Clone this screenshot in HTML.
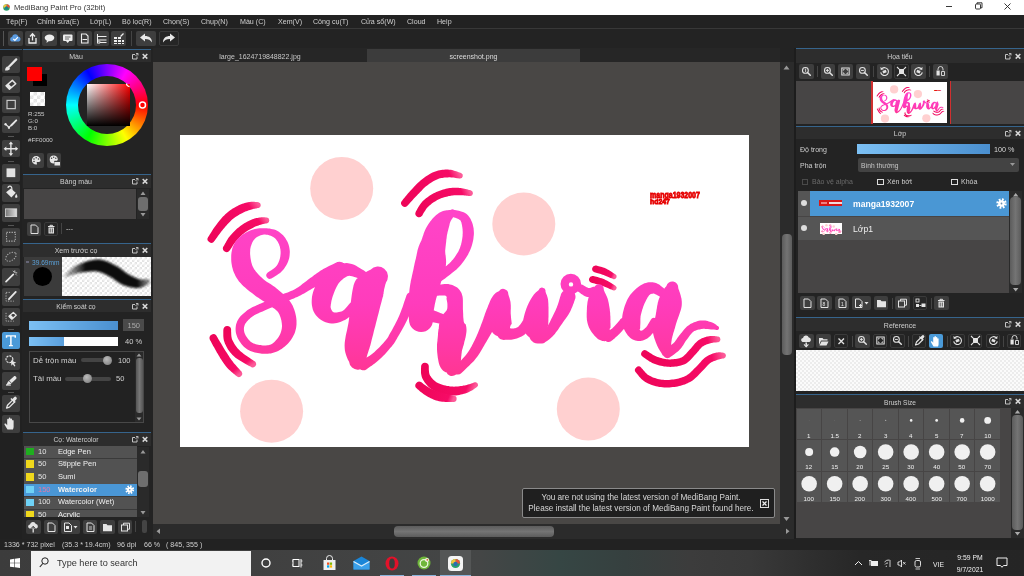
<!DOCTYPE html>
<html><head><meta charset="utf-8"><style>
*{margin:0;padding:0;box-sizing:border-box}
html,body{width:1024px;height:576px;overflow:hidden;background:#232323;font-family:"Liberation Sans",sans-serif;}
.a{position:absolute}
.b{position:absolute;background:#3e3e3e;border-radius:2px}
.h{position:absolute;background:#2d2d2d;border-top:1px solid #36648c}
.t{position:absolute;white-space:nowrap;color:#d0d0d0;font-size:7.5px;line-height:10px;will-change:transform}
.c{text-align:center}
.chk{background-color:#fff;background-image:linear-gradient(45deg,#e4e4e4 25%,transparent 25%,transparent 75%,#e4e4e4 75%),linear-gradient(45deg,#e4e4e4 25%,transparent 25%,transparent 75%,#e4e4e4 75%);background-size:5px 5px;background-position:0 0,2.5px 2.5px}
svg{position:absolute;overflow:visible}
</style></head><body>
<div class="a" style="left:0px;top:0px;width:1024px;height:15px;background:#fff;"></div>
<svg style="left:3px;top:3.5px" width="7" height="7" viewBox="0 0 9 9"><circle cx="4.5" cy="4.5" r="4.2" fill="#2aa36b"/><path d="M4.5 .3a4.2 4.2 0 0 1 4.2 4.2h-4.2z" fill="#e8553c"/><path d="M.3 4.5a4.2 4.2 0 0 1 4.2-4.2v4.2z" fill="#f2c63c"/><circle cx="4.5" cy="5" r="2" fill="#1d7f8f"/></svg>
<div class="t" style="left:14px;top:2.5px;font-size:7.6px;color:#333;">MediBang Paint Pro (32bit)</div>
<svg style="left:945px;top:2px" width="70" height="9" viewBox="0 0 70 9"><path d="M1 4.5h6" stroke="#222" stroke-width="0.9"/><rect x="30.5" y="2" width="5" height="5" fill="none" stroke="#222" stroke-width="0.9" rx="1"/><path d="M32 2v-1.2h5v5h-1.5" fill="none" stroke="#222" stroke-width="0.9"/><path d="M59.5 1.5l6 6M65.5 1.5l-6 6" stroke="#222" stroke-width="0.9"/></svg>
<div class="a" style="left:0px;top:15px;width:1024px;height:13px;background:#222;"></div>
<div class="t" style="left:6px;top:17px;font-size:7.1px;color:#d0d0d0;">Tệp(F)</div>
<div class="t" style="left:36.5px;top:17px;font-size:7.1px;color:#d0d0d0;">Chỉnh sửa(E)</div>
<div class="t" style="left:89.5px;top:17px;font-size:7.1px;color:#d0d0d0;">Lớp(L)</div>
<div class="t" style="left:121.5px;top:17px;font-size:7.1px;color:#d0d0d0;">Bộ lọc(R)</div>
<div class="t" style="left:162.5px;top:17px;font-size:7.1px;color:#d0d0d0;">Chọn(S)</div>
<div class="t" style="left:200.5px;top:17px;font-size:7.1px;color:#d0d0d0;">Chụp(N)</div>
<div class="t" style="left:240px;top:17px;font-size:7.1px;color:#d0d0d0;">Màu (C)</div>
<div class="t" style="left:277.5px;top:17px;font-size:7.1px;color:#d0d0d0;">Xem(V)</div>
<div class="t" style="left:313px;top:17px;font-size:7.1px;color:#d0d0d0;">Công cụ(T)</div>
<div class="t" style="left:361px;top:17px;font-size:7.1px;color:#d0d0d0;">Cửa sổ(W)</div>
<div class="t" style="left:406.5px;top:17px;font-size:7.1px;color:#d0d0d0;">Cloud</div>
<div class="t" style="left:437px;top:17px;font-size:7.1px;color:#d0d0d0;">Help</div>
<div class="a" style="left:0px;top:28px;width:1024px;height:20px;background:#232323;border-top:1px solid #383838"></div>
<div class="a" style="left:3px;top:31px;width:1px;height:15px;background:#555;"></div>
<div class="b" style="left:8px;top:31px;width:15px;height:15px;background:#3e3e3e;"></div>
<div class="b" style="left:25px;top:31px;width:15px;height:15px;background:#3e3e3e;"></div>
<div class="b" style="left:42px;top:31px;width:15px;height:15px;background:#3e3e3e;"></div>
<div class="b" style="left:59.5px;top:31px;width:15px;height:15px;background:#3e3e3e;"></div>
<div class="b" style="left:77px;top:31px;width:15px;height:15px;background:#3e3e3e;"></div>
<div class="b" style="left:94px;top:31px;width:15px;height:15px;background:#3e3e3e;"></div>
<div class="b" style="left:111px;top:31px;width:15px;height:15px;background:#3e3e3e;"></div>
<div class="a" style="left:131px;top:31px;width:1px;height:15px;background:#444;"></div>
<div class="b" style="left:136px;top:31px;width:19.5px;height:15px;background:#3e3e3e;"></div>
<div class="b" style="left:159px;top:31px;width:19.5px;height:15px;background:#262626;border:1px solid #3a3a3a"></div>
<svg style="left:139px;top:33px" width="14" height="11" viewBox="0 0 14 11"><path d="M1 4.5l5-4v2.5c4 0 7 2 7 6.5c-1.5-2.5-3.5-3.5-7-3.5v2.5z" fill="#e8e8e8"/></svg>
<svg style="left:162px;top:33px" width="14" height="11" viewBox="0 0 14 11"><path d="M13 4.5l-5-4v2.5c-4 0-7 2-7 6.5c1.5-2.5 3.5-3.5 7-3.5v2.5z" fill="#e8e8e8"/></svg>
<svg style="left:8px;top:31px" width="15" height="15" viewBox="0 0 15 15"><path d="M3.5 10.5a2.3 2.3 0 0 1 .6-4.4a3.2 3.2 0 0 1 6.2-.6a2.6 2.6 0 0 1 .6 5z" fill="#5b9be0"/><path d="M5.3 7.8l1.6 1.6l3-3.2" stroke="#fff" stroke-width="1.2" fill="none"/></svg>
<svg style="left:25px;top:31px" width="15" height="15" viewBox="0 0 15 15"><path d="M4 7v5h7v-5" fill="none" stroke="#eee" stroke-width="1.3"/><path d="M7.5 9.5v-6M5 5.5l2.5-2.7l2.5 2.7" fill="none" stroke="#eee" stroke-width="1.3"/></svg>
<svg style="left:42px;top:31px" width="15" height="15" viewBox="0 0 15 15"><ellipse cx="7.5" cy="6.8" rx="4.8" ry="3.4" fill="#eee"/><path d="M5 9l-.5 3l3-2.4z" fill="#eee"/></svg>
<svg style="left:59.5px;top:31px" width="15" height="15" viewBox="0 0 15 15"><rect x="3" y="3.5" width="9.5" height="6.5" rx="1" fill="#eee"/><path d="M6 10l1.7 2l1.7-2z" fill="#eee"/><path d="M5 6h5.5M5 8h4" stroke="#444" stroke-width="0.8"/></svg>
<svg style="left:77px;top:31px" width="15" height="15" viewBox="0 0 15 15"><path d="M4.5 3h4.5l2 2v7h-6.5z" fill="none" stroke="#eee" stroke-width="1.1"/><path d="M5.5 8.5h4.5" stroke="#eee" stroke-width="1"/></svg>
<svg style="left:94px;top:31px" width="15" height="15" viewBox="0 0 15 15"><path d="M3.5 3v9.5M3.5 5.5h9M3.5 9h9M5.5 11.5h7" stroke="#eee" stroke-width="1" fill="none"/><circle cx="5" cy="11.2" r="1.2" fill="none" stroke="#eee" stroke-width=".8"/></svg>
<svg style="left:111px;top:31px" width="15" height="15" viewBox="0 0 15 15"><path d="M3 6h3v2h-3zM7 6h3v2h-3zM3 9h3v2h-3zM7 9h3v2h-3zM11 9h2v2h-2zM3 12h3v1h-3zM7 12h3v1h-3zM11 12h2v1h-2z" fill="#eee"/><path d="M9.5 5.5l3-3" stroke="#eee" stroke-width="1.2"/></svg>
<div class="a" style="left:0px;top:48px;width:22px;height:491px;background:#212121;"></div>
<div class="a" style="left:0px;top:49px;width:22px;height:1px;background:#34506a;"></div>
<div class="b" style="left:2.200px;top:55.5px;width:17.800px;height:17.500px;background:#3e3e3e"><svg style="left:0;top:0" width="17.800" height="17.500" viewBox="0 0 18 18"><path d="M14.500 3.500l-7.500 7.500" stroke="#e6e6e6" stroke-width="2.300" stroke-linecap="round"/><path d="M3 15c0-2.300 1-4.200 3-4.200l2 2c0 1.600-2.500 2.400-5 2.200z" fill="#e6e6e6"/></svg></div>
<div class="b" style="left:2.200px;top:75.5px;width:17.800px;height:17.500px;background:#3e3e3e"><svg style="left:0;top:0" width="17.800" height="17.500" viewBox="0 0 18 18"><path d="M4 10l6.500-5.500l3.500 3.500l-6.500 5.500z" fill="none" stroke="#e6e6e6" stroke-width="1.500" stroke-linejoin="round"/><path d="M4 10l2.500-2l3.500 3.500l-2.500 2z" fill="#e6e6e6"/></svg></div>
<div class="b" style="left:2.200px;top:95.5px;width:17.800px;height:17.500px;background:#3e3e3e"><svg style="left:0;top:0" width="17.800" height="17.500" viewBox="0 0 18 18"><rect x="5" y="4.500" width="8.500" height="8.500" fill="none" stroke="#ccc" stroke-width="1.200"/></svg></div>
<div class="b" style="left:2.200px;top:115.5px;width:17.800px;height:17.500px;background:#3e3e3e"><svg style="left:0;top:0" width="17.800" height="17.500" viewBox="0 0 18 18"><path d="M9.500 9.500l5-5" stroke="#e6e6e6" stroke-width="2" stroke-linecap="round"/><path d="M3.500 8.500l3.500 3l2.500-2" fill="none" stroke="#e6e6e6" stroke-width="1.200"/><circle cx="3.500" cy="8.500" r="1.200" fill="#e6e6e6"/><circle cx="7" cy="12" r="1.200" fill="#e6e6e6"/></svg></div>
<div class="b" style="left:2.200px;top:139.5px;width:17.800px;height:17.500px;background:#3e3e3e"><svg style="left:0;top:0" width="17.800" height="17.500" viewBox="0 0 18 18"><path d="M9 3v12M3 9h12" stroke="#e6e6e6" stroke-width="1.400"/><path d="M9 1.500l2.300 2.800h-4.600zM9 16.500l2.300-2.800h-4.600zM1.500 9l2.800-2.300v4.600zM16.500 9l-2.800-2.300v4.600z" fill="#e6e6e6"/></svg></div>
<div class="b" style="left:2.200px;top:164px;width:17.800px;height:17.500px;background:#3e3e3e"><svg style="left:0;top:0" width="17.800" height="17.500" viewBox="0 0 18 18"><rect x="4.500" y="4.500" width="9" height="9" fill="#e2e2e2"/></svg></div>
<div class="b" style="left:2.200px;top:184px;width:17.800px;height:17.500px;background:#3e3e3e"><svg style="left:0;top:0" width="17.800" height="17.500" viewBox="0 0 18 18"><path d="M4 8.500l5-4l5 4.500l-4.500 5z" fill="#e6e6e6"/><path d="M6 4c0-2.500 4-2.500 4 1v2" fill="none" stroke="#e6e6e6" stroke-width="1.200"/><path d="M14.500 10c.8 1.500 1.200 2.300 1.200 3a1.200 1.200 0 0 1-2.400 0c0-.7.400-1.500 1.200-3z" fill="#e6e6e6"/></svg></div>
<div class="b" style="left:2.200px;top:204px;width:17.800px;height:17.500px;background:#3e3e3e"><svg style="left:0;top:0" width="17.800" height="17.500" viewBox="0 0 18 18"><defs><linearGradient id="gg"><stop offset="0" stop-color="#777"/><stop offset="1" stop-color="#ddd"/></linearGradient></defs><rect x="3.500" y="5" width="11.500" height="8" fill="url(#gg)" stroke="#ddd" stroke-width=".8"/></svg></div>
<div class="b" style="left:2.200px;top:228px;width:17.800px;height:17.500px;background:#3e3e3e"><svg style="left:0;top:0" width="17.800" height="17.500" viewBox="0 0 18 18"><rect x="4.500" y="4.500" width="9" height="9" fill="none" stroke="#b0b0b0" stroke-width="1.100" stroke-dasharray="1.300 1.300"/></svg></div>
<div class="b" style="left:2.200px;top:248px;width:17.800px;height:17.500px;background:#3e3e3e"><svg style="left:0;top:0" width="17.800" height="17.500" viewBox="0 0 18 18"><ellipse cx="9" cy="9" rx="6" ry="3.800" transform="rotate(-35 9 9)" fill="none" stroke="#b0b0b0" stroke-width="1.100" stroke-dasharray="1.300 1.300"/></svg></div>
<div class="b" style="left:2.200px;top:268px;width:17.800px;height:17.500px;background:#3e3e3e"><svg style="left:0;top:0" width="17.800" height="17.500" viewBox="0 0 18 18"><path d="M4 14l7.500-7.500" stroke="#e6e6e6" stroke-width="1.800" stroke-linecap="round"/><path d="M13 2.500v2.500M15.500 5h-2M11 3l1 1M15 7.500l-1-1" stroke="#e6e6e6" stroke-width=".9"/></svg></div>
<div class="b" style="left:2.200px;top:288px;width:17.800px;height:17.500px;background:#3e3e3e"><svg style="left:0;top:0" width="17.800" height="17.500" viewBox="0 0 18 18"><path d="M4 5v8.500h8" fill="none" stroke="#b0b0b0" stroke-width="1" stroke-dasharray="1.300 1.300"/><path d="M4 4.500h5" fill="none" stroke="#b0b0b0" stroke-width="1" stroke-dasharray="1.300 1.300"/><path d="M7 11.500l7-7.500" stroke="#e6e6e6" stroke-width="1.900" stroke-linecap="round"/></svg></div>
<div class="b" style="left:2.200px;top:308px;width:17.800px;height:17.500px;background:#3e3e3e"><svg style="left:0;top:0" width="17.800" height="17.500" viewBox="0 0 18 18"><path d="M4 5v8.500h8" fill="none" stroke="#b0b0b0" stroke-width="1" stroke-dasharray="1.300 1.300"/><path d="M7 8.500l4.500-4l3 3l-4.500 4z" fill="none" stroke="#e6e6e6" stroke-width="1.300" stroke-linejoin="round"/><path d="M7 8.500l1.800-1.500l3 3l-1.800 1.500z" fill="#e6e6e6"/></svg></div>
<div class="b" style="left:2.200px;top:331.5px;width:17.800px;height:17.500px;background:#4a9ad8"><svg style="left:0;top:0" width="17.800" height="17.500" viewBox="0 0 18 18"><path d="M4.500 6v-2h9v2M9 4v10M7 14h4" fill="none" stroke="#fff" stroke-width="1.500"/></svg></div>
<div class="b" style="left:2.200px;top:352px;width:17.800px;height:17.500px;background:#3e3e3e"><svg style="left:0;top:0" width="17.800" height="17.500" viewBox="0 0 18 18"><circle cx="7.500" cy="7.500" r="3.500" fill="none" stroke="#e6e6e6" stroke-width="1.200" stroke-dasharray="2.200 1"/><path d="M9 8.500l5.500 2.500l-2.300.8l1.500 2.500l-1.200.7l-1.500-2.500l-1.500 1.700z" fill="#e6e6e6"/></svg></div>
<div class="b" style="left:2.200px;top:372px;width:17.800px;height:17.500px;background:#3e3e3e"><svg style="left:0;top:0" width="17.800" height="17.500" viewBox="0 0 18 18"><path d="M4 13.500l2-3.500l6-5.500c1.500-1 3.500 1 2.500 2.500l-6 5.500z" fill="#e6e6e6"/><path d="M4 13.500h5" stroke="#e6e6e6" stroke-width="1"/><path d="M7 9l2.500 2.500" stroke="#3e3e3e" stroke-width=".8"/></svg></div>
<div class="b" style="left:2.200px;top:394.5px;width:17.800px;height:17.500px;background:#3e3e3e"><svg style="left:0;top:0" width="17.800" height="17.500" viewBox="0 0 18 18"><path d="M4.500 13.500l1-3l5.500-5.500l2 2l-5.500 5.500z" fill="none" stroke="#e6e6e6" stroke-width="1.300" stroke-linejoin="round"/><path d="M10.500 4l1.800-1.800a1.600 1.600 0 0 1 2.300 2.300l-1.800 1.800l1 1l-1 1l-4.300-4.300l1-1z" fill="#e6e6e6"/></svg></div>
<div class="b" style="left:2.200px;top:415px;width:17.800px;height:17.500px;background:#3e3e3e"><svg style="left:0;top:0" width="17.800" height="17.500" viewBox="0 0 18 18"><path d="M5.500 15l-3-5c-.5-1 .6-1.700 1.400-.9l1.300 1.400v-6c0-1 1.600-1 1.600 0v-1.200c0-1 1.700-1 1.700 0v1c0-1 1.700-1 1.700 0v1.500c0-1 1.600-1 1.600 0v6.200c0 1.500-.8 3-.8 3z" fill="#e6e6e6"/></svg></div>
<div class="a" style="left:8px;top:136px;width:6px;height:1px;background:#555;"></div>
<div class="a" style="left:8px;top:160.5px;width:6px;height:1px;background:#555;"></div>
<div class="a" style="left:8px;top:224.5px;width:6px;height:1px;background:#555;"></div>
<div class="a" style="left:8px;top:328.5px;width:6px;height:1px;background:#555;"></div>
<div class="a" style="left:8px;top:392px;width:6px;height:1px;background:#555;"></div>
<div class="a" style="left:23px;top:48px;width:128px;height:491px;background:#232323;"></div>
<div class="h" style="left:23px;top:49px;width:128px;height:13px"></div><div class="t" style="left:23px;top:52px;font-size:7px;color:#cfcfcf;width:106px;text-align:center">Màu</div>
<svg style="left:132px;top:52.5px" width="17" height="7" viewBox="0 0 17 7"><path d="M3 1.500h-2.500v4.500h4.500v-2.500" fill="none" stroke="#c4c4c4" stroke-width="1"/><path d="M3.500 3l2.300-2.300M4 .5h2v2" fill="none" stroke="#c4c4c4" stroke-width=".9"/><path d="M10.700 1l4.600 4.600M15.300 1l-4.600 4.600" stroke="#d8d8d8" stroke-width="1.500"/></svg>
<div class="a" style="left:33px;top:73.5px;width:14px;height:12.5px;background:#000;"></div>
<div class="a" style="left:27px;top:67px;width:14.5px;height:13.5px;background:#fe0000;"></div>
<div class="a chk" style="left:29.5px;top:91.5px;width:15px;height:14px;background-size:7px 7px;background-position:0 0,3.500px 3.500px"></div><div class="t" style="left:27.5px;top:109px;font-size:6.2px;color:#c8c8c8;">R:255</div>
<div class="t" style="left:27.5px;top:116px;font-size:6.2px;color:#c8c8c8;">G:0</div>
<div class="t" style="left:27.5px;top:123px;font-size:6.2px;color:#c8c8c8;">B:0</div>
<div class="t" style="left:27.5px;top:134.6px;font-size:6.2px;color:#c8c8c8;">#FF0000</div>
<div class="a" style="left:65.500px;top:63.500px;width:82px;height:82px;border-radius:50%;background:conic-gradient(from 90deg,#f00,#ff0,#0f0,#0ff,#00f,#f0f,#f00)"></div><div class="a" style="left:77.500px;top:75.500px;width:58px;height:58px;border-radius:50%;background:#232323"></div><div class="a" style="left:86.500px;top:83.500px;width:43px;height:42px;background:linear-gradient(to bottom,rgba(0,0,0,0),#000),linear-gradient(to right,#fff,#f00)"></div><svg style="left:60px;top:60px" width="95" height="95" viewBox="0 0 95 95"><circle cx="82.500" cy="45" r="3" fill="none" stroke="#fff" stroke-width="1.500"/><path d="M66.500 23.500a3 3 0 0 0 3 3" fill="none" stroke="#fff" stroke-width="1.300"/></svg>
<div class="b" style="left:29px;top:153px;width:14.5px;height:14.5px;background:#3e3e3e;"></div>
<div class="b" style="left:46.5px;top:153px;width:14.5px;height:14.5px;background:#3e3e3e;"></div>
<svg style="left:29px;top:153px" width="14.5" height="14.5" viewBox="0 0 14.5 14.5"><path d="M7.200 3a4.300 4.300 0 1 0 0 8.600c1 0 1-.8.600-1.300c-.5-.7 0-1.400.8-1.400h1.300c1 0 1.600-.7 1.600-1.700c0-2.300-2-4.200-4.300-4.200z" fill="#e6e6e6"/><circle cx="5" cy="6" r=".8" fill="#3e3e3e"/><circle cx="7.200" cy="4.800" r=".8" fill="#3e3e3e"/><circle cx="9.500" cy="6" r=".8" fill="#3e3e3e"/><circle cx="5" cy="8.500" r=".8" fill="#3e3e3e"/></svg>
<svg style="left:46.5px;top:153px" width="14.5" height="14.5" viewBox="0 0 14.5 14.5"><path d="M6.700 2.500a4 4 0 1 0 0 8c1 0 1-.8.600-1.300c-.5-.7 0-1.400.8-1.400h1.200c1 0 1.500-.6 1.500-1.500c0-2.100-1.900-3.800-4.100-3.800z" fill="#e6e6e6"/><circle cx="4.600" cy="5.300" r=".7" fill="#3e3e3e"/><circle cx="6.700" cy="4.200" r=".7" fill="#3e3e3e"/><circle cx="8.800" cy="5.300" r=".7" fill="#3e3e3e"/><rect x="7.500" y="9" width="5.500" height="3.500" fill="#e6e6e6"/></svg>
<div class="h" style="left:23px;top:174px;width:128px;height:14px"></div><div class="t" style="left:23px;top:176.7px;font-size:7px;color:#cfcfcf;width:106px;text-align:center">Bảng màu</div>
<svg style="left:132px;top:178px" width="17" height="7" viewBox="0 0 17 7"><path d="M3 1.500h-2.500v4.500h4.500v-2.500" fill="none" stroke="#c4c4c4" stroke-width="1"/><path d="M3.500 3l2.300-2.300M4 .5h2v2" fill="none" stroke="#c4c4c4" stroke-width=".9"/><path d="M10.700 1l4.600 4.600M15.300 1l-4.600 4.600" stroke="#d8d8d8" stroke-width="1.500"/></svg>
<div class="a" style="left:24px;top:189px;width:112px;height:29.5px;background:#474545;"></div>
<div class="a" style="left:137px;top:189px;width:12px;height:29.5px;background:#2a2a2a;"></div>
<div class="a" style="left:137.5px;top:196.5px;width:10.5px;height:14.5px;background:#6e6e6e;border-radius:3px"></div>
<svg style="left:137px;top:189px" width="12" height="30" viewBox="0 0 12 30"><path d="M3.500 6l2.500-3.500l2.500 3.500zM3.500 24l2.500 3.500l2.500-3.500z" fill="#999"/></svg>
<div class="b" style="left:26.5px;top:221.5px;width:14.5px;height:14px;background:#3e3e3e;"></div>
<div class="b" style="left:43.5px;top:221.5px;width:14.5px;height:14px;background:#262626;border:1px solid #3a3a3a"></div>
<svg style="left:26.5px;top:221.5px" width="14.5" height="14" viewBox="0 0 14.5 14"><path d="M4 3h4.500l2.500 2.500v6h-7z" fill="none" stroke="#e0e0e0" stroke-width="1"/></svg>
<svg style="left:43.5px;top:221.5px" width="14.5" height="14" viewBox="0 0 14.5 14"><path d="M4 4.500h6.500M6 4.500v-1.200h2.500v1.200" fill="none" stroke="#e0e0e0" stroke-width="1"/><path d="M4.500 5.500h5.500v6h-5.500z" fill="#e0e0e0"/><path d="M6.200 6.500v4M8.300 6.500v4" stroke="#333" stroke-width=".8"/></svg>
<div class="a" style="left:61px;top:223px;width:1px;height:11px;background:#444;"></div>
<div class="t" style="left:66px;top:224px;font-size:7px;color:#ccc;">---</div>
<div class="h" style="left:23px;top:242.500px;width:128px;height:14px"></div><div class="t" style="left:23px;top:246px;font-size:7px;color:#cfcfcf;width:106px;text-align:center">Xem trước cọ</div>
<svg style="left:132px;top:246.5px" width="17" height="7" viewBox="0 0 17 7"><path d="M3 1.500h-2.500v4.500h4.500v-2.500" fill="none" stroke="#c4c4c4" stroke-width="1"/><path d="M3.500 3l2.300-2.300M4 .5h2v2" fill="none" stroke="#c4c4c4" stroke-width=".9"/><path d="M10.700 1l4.600 4.600M15.300 1l-4.600 4.600" stroke="#d8d8d8" stroke-width="1.500"/></svg>
<div class="a" style="left:24px;top:256.5px;width:37.5px;height:39px;background:#3b3b3b;"></div>
<div class="t" style="left:31.5px;top:258px;font-size:6.6px;color:#5a9fd6;">39.69mm</div>
<div class="a" style="left:25.5px;top:260.5px;width:3px;height:2px;background:#667;"></div>
<div class="a" style="left:32.500px;top:266.500px;width:19px;height:19px;border-radius:50%;background:#000"></div><div class="a chk" style="left:61.500px;top:256.500px;width:89px;height:39px"></div><svg style="left:61.5px;top:256.5px" width="89" height="39" viewBox="0 0 89 39"><defs><filter id="bl" x="-10%" y="-30%" width="120%" height="160%"><feGaussianBlur stdDeviation="1"/></filter><linearGradient id="bg1" x1="0" x2="1"><stop offset="0" stop-color="#111" stop-opacity=".15"/><stop offset=".25" stop-color="#0a0a0a" stop-opacity="1"/><stop offset=".85" stop-color="#0a0a0a" stop-opacity="1"/><stop offset="1" stop-color="#111" stop-opacity=".4"/></linearGradient></defs><path d="M4.3 20.3 L5.1 20.0 L6.2 19.6 L7.4 19.1 L8.7 18.5 L10.2 18.0 L11.7 17.4 L13.2 16.9 L14.8 16.5 L16.3 16.1 L17.8 15.8 L19.4 15.5 L21.2 15.2 L23.1 14.9 L25.0 14.7 L26.9 14.5 L28.8 14.4 L30.6 14.3 L32.3 14.3 L33.8 14.3 L35.1 14.5 L36.3 14.7 L37.4 15.0 L38.6 15.3 L39.7 15.8 L40.9 16.3 L42.2 16.8 L43.5 17.5 L44.8 18.1 L46.3 18.9 L47.6 19.5 L48.7 20.2 L49.8 20.8 L51.0 21.6 L52.2 22.5 L53.4 23.4 L54.7 24.3 L56.1 25.3 L57.6 26.2 L59.2 27.1 L60.8 27.9 L62.4 28.5 L64.0 29.0 L65.5 29.5 L67.1 29.9 L68.6 30.3 L70.2 30.6 L71.7 30.8 L73.2 30.9 L74.7 31.0 L76.2 31.0 L77.7 30.8 L79.2 30.5 L80.6 30.1 L81.9 29.6 L83.0 29.0 L84.0 28.5 L84.9 28.0 L85.6 27.5 L86.2 27.2 L86.6 26.9 A2.5 2.5 0 0 0 85.4 22.1 L85.4 22.1 L84.7 22.1 L83.9 22.2 L83.0 22.3 L82.1 22.4 L81.1 22.5 L80.1 22.5 L79.2 22.5 L78.3 22.4 L77.5 22.2 L76.8 22.0 L76.0 21.7 L75.0 21.4 L74.0 21.0 L72.9 20.5 L71.8 20.0 L70.7 19.5 L69.5 18.9 L68.4 18.3 L67.2 17.7 L66.2 17.1 L65.2 16.5 L64.2 15.9 L63.2 15.1 L62.0 14.3 L60.8 13.3 L59.5 12.3 L58.1 11.3 L56.6 10.3 L55.0 9.3 L53.4 8.5 L51.9 7.7 L50.5 7.0 L49.1 6.2 L47.5 5.5 L45.8 4.7 L44.0 4.0 L42.1 3.4 L40.2 3.0 L38.0 2.6 L35.9 2.5 L33.6 2.6 L31.4 2.9 L29.2 3.3 L27.0 3.8 L24.8 4.4 L22.7 5.1 L20.7 5.9 L18.8 6.6 L16.9 7.4 L15.2 8.2 L13.5 9.1 L11.8 10.1 L10.3 11.2 L8.8 12.3 L7.5 13.5 L6.2 14.5 L5.1 15.5 L4.2 16.4 L3.4 17.2 L2.7 17.7 A1.5 1.5 0 0 0 4.3 20.3Z" fill="url(#bg1)" filter="url(#bl)"/></svg>
<div class="h" style="left:23px;top:298.500px;width:128px;height:13.500px"></div><div class="t" style="left:23px;top:302px;font-size:6.8px;color:#cfcfcf;width:106px;text-align:center">Kiểm soát cọ</div>
<svg style="left:132px;top:302.5px" width="17" height="7" viewBox="0 0 17 7"><path d="M3 1.500h-2.500v4.500h4.500v-2.500" fill="none" stroke="#c4c4c4" stroke-width="1"/><path d="M3.500 3l2.300-2.300M4 .5h2v2" fill="none" stroke="#c4c4c4" stroke-width=".9"/><path d="M10.700 1l4.600 4.600M15.300 1l-4.600 4.600" stroke="#d8d8d8" stroke-width="1.500"/></svg>
<div class="a" style="left:28.5px;top:320.5px;width:89.5px;height:9.5px;background:linear-gradient(to right,#7cc0f4,#4a8fcf);"></div>
<div class="a" style="left:122.5px;top:319px;width:21.5px;height:12px;background:#4a4a4a;"></div>
<div class="t" style="left:122.5px;top:320.5px;font-size:7.5px;color:#aaa;width:21.5px;text-align:center">150</div>
<div class="a" style="left:28.5px;top:337px;width:89.5px;height:9px;background:#fff;"></div>
<div class="a" style="left:28.5px;top:337px;width:35.5px;height:9px;background:linear-gradient(to right,#7cc0f4,#5a9fdc);"></div>
<div class="t" style="left:125px;top:337px;font-size:7.5px;color:#d0d0d0;">40 %</div>
<div class="a" style="left:28.5px;top:351px;width:115.5px;height:72px;background:#222;border:1px solid #484848"></div>
<div class="t" style="left:33px;top:355.5px;font-size:7.9px;color:#d0d0d0;">Dễ trộn màu</div>
<div class="a" style="left:81px;top:358px;width:30px;height:4px;background:#444;border-radius:2px"></div>
<div class="a" style="left:103px;top:355.500px;width:9px;height:9px;border-radius:50%;background:radial-gradient(circle at 40% 35%,#bbb,#777)"></div><div class="t" style="left:117.5px;top:355.5px;font-size:7.5px;color:#d0d0d0;">100</div>
<div class="t" style="left:33px;top:374px;font-size:7.9px;color:#d0d0d0;">Tải màu</div>
<div class="a" style="left:64.5px;top:376.5px;width:46.5px;height:4px;background:#444;border-radius:2px"></div>
<div class="a" style="left:83px;top:374px;width:9px;height:9px;border-radius:50%;background:radial-gradient(circle at 40% 35%,#bbb,#777)"></div><div class="t" style="left:115.5px;top:374px;font-size:7.5px;color:#d0d0d0;">50</div>
<div class="a" style="left:135px;top:352px;width:8px;height:70px;background:#2a2a2a;"></div>
<div class="a" style="left:135.5px;top:358px;width:7.5px;height:55px;background:linear-gradient(to right,#555,#777,#555);border-radius:3px"></div>
<svg style="left:135px;top:352px" width="8" height="70" viewBox="0 0 8 70"><path d="M1.500 4.500l2.500-3l2.500 3zM1.500 65.500l2.500 3l2.500-3z" fill="#999"/></svg>
<div class="h" style="left:23px;top:432px;width:128px;height:13.500px"></div><div class="t" style="left:23px;top:435.3px;font-size:6.8px;color:#cfcfcf;width:106px;text-align:center">Cọ: Watercolor</div>
<svg style="left:132px;top:436px" width="17" height="7" viewBox="0 0 17 7"><path d="M3 1.500h-2.500v4.500h4.500v-2.500" fill="none" stroke="#c4c4c4" stroke-width="1"/><path d="M3.500 3l2.300-2.300M4 .5h2v2" fill="none" stroke="#c4c4c4" stroke-width=".9"/><path d="M10.700 1l4.600 4.600M15.300 1l-4.600 4.600" stroke="#d8d8d8" stroke-width="1.500"/></svg>
<div class="a" style="left:24px;top:445.500px;width:112.500px;height:71px;overflow:hidden;background:#3a3a3a"><div class="a" style="left:0;top:0.5px;width:112.500px;height:12.250px;background:#525252"></div><div class="a" style="left:2.300px;top:2.2px;width:7.500px;height:7.500px;background:#1fae1f"></div><div class="t" style="left:14px;top:1.1px;font-size:7.500px;color:#e4e4e4">10</div><div class="t" style="left:34.300px;top:1.1px;font-size:7.500px;color:#f0f0f0;">Edge Pen</div><div class="a" style="left:0;top:13.2px;width:112.500px;height:12.250px;background:#525252"></div><div class="a" style="left:2.300px;top:14.899999999999999px;width:7.500px;height:7.500px;background:#f0d81c"></div><div class="t" style="left:14px;top:13.799999999999999px;font-size:7.500px;color:#e4e4e4">50</div><div class="t" style="left:34.300px;top:13.799999999999999px;font-size:7.500px;color:#f0f0f0;">Stipple Pen</div><div class="a" style="left:0;top:25.9px;width:112.500px;height:12.250px;background:#525252"></div><div class="a" style="left:2.300px;top:27.599999999999998px;width:7.500px;height:7.500px;background:#f0d81c"></div><div class="t" style="left:14px;top:26.5px;font-size:7.500px;color:#e4e4e4">50</div><div class="t" style="left:34.300px;top:26.5px;font-size:7.500px;color:#f0f0f0;">Sumi</div><div class="a" style="left:0;top:38.599999999999994px;width:112.500px;height:12.250px;background:#4a97d6"></div><div class="a" style="left:2.300px;top:40.3px;width:7.500px;height:7.500px;background:#6fd2f6"></div><div class="t" style="left:14px;top:39.199999999999996px;font-size:7.500px;color:#e07aa8">150</div><div class="t" style="left:34.300px;top:39.199999999999996px;font-size:7.500px;color:#f0f0f0;font-weight:bold;">Watercolor</div><div class="a" style="left:0;top:51.3px;width:112.500px;height:12.250px;background:#525252"></div><div class="a" style="left:2.300px;top:53.0px;width:7.500px;height:7.500px;background:#6fd2f6"></div><div class="t" style="left:14px;top:51.9px;font-size:7.500px;color:#e4e4e4">100</div><div class="t" style="left:34.300px;top:51.9px;font-size:7.500px;color:#f0f0f0;">Watercolor (Wet)</div><div class="a" style="left:0;top:64.0px;width:112.500px;height:12.250px;background:#525252"></div><div class="a" style="left:2.300px;top:65.7px;width:7.500px;height:7.500px;background:#f0d81c"></div><div class="t" style="left:14px;top:64.6px;font-size:7.500px;color:#e4e4e4">50</div><div class="t" style="left:34.300px;top:64.6px;font-size:7.500px;color:#f0f0f0;">Acrylic</div></div>
<svg style="left:125.3px;top:485.3px" width="9.5" height="9.5" viewBox="0 0 9.5 9.5"><circle cx="4.750" cy="4.750" r="3.100" fill="none" stroke="#fff" stroke-width="2.600" stroke-dasharray="1.350 1.080"/><circle cx="4.750" cy="4.750" r="2.800" fill="#fff"/><circle cx="4.750" cy="4.750" r=".800" fill="#6a8fb0"/></svg>
<div class="a" style="left:137px;top:446.5px;width:12px;height:70px;background:#2a2a2a;"></div>
<div class="a" style="left:137.5px;top:470.5px;width:10.5px;height:16px;background:#6e6e6e;border-radius:3px"></div>
<svg style="left:137px;top:446.5px" width="12" height="70" viewBox="0 0 12 70"><path d="M3.500 6.500l2.500-3.500l2.500 3.500zM3.500 64l2.500 3.500l2.500-3.500z" fill="#999"/></svg>
<div class="b" style="left:26.25px;top:519.5px;width:14.5px;height:14px;background:#3e3e3e;"></div>
<div class="b" style="left:43.75px;top:519.5px;width:14.5px;height:14px;background:#3e3e3e;"></div>
<div class="b" style="left:61.25px;top:519.5px;width:19px;height:14px;background:#3e3e3e;"></div>
<div class="b" style="left:82.5px;top:519.5px;width:14.5px;height:14px;background:#3e3e3e;"></div>
<div class="b" style="left:100px;top:519.5px;width:14.5px;height:14px;background:#3e3e3e;"></div>
<div class="b" style="left:117.5px;top:519.5px;width:14.5px;height:14px;background:#3e3e3e;"></div>
<div class="a" style="left:135px;top:521px;width:1px;height:11px;background:#444;"></div>
<div class="a" style="left:142px;top:520px;width:5px;height:13px;background:#444;border-radius:2px"></div>
<svg style="left:26.25px;top:519.5px" width="14.5" height="14" viewBox="0 0 14.5 14"><path d="M3.500 8.500a2 2 0 0 1 .5-3.900a3 3 0 0 1 5.800-.5a2.300 2.300 0 0 1 .7 4.400z" fill="#e4e4e4"/><path d="M7.200 12v-5M5.200 8.500l2-2.300l2 2.300" stroke="#3e3e3e" stroke-width="1" fill="none"/><path d="M7.200 12.500v-4" stroke="#e4e4e4" stroke-width="1.300"/></svg>
<svg style="left:43.75px;top:519.5px" width="14.5" height="14" viewBox="0 0 14.5 14"><path d="M4 3h4.500l2.500 2.500v6h-7z" fill="none" stroke="#e4e4e4" stroke-width="1"/></svg>
<svg style="left:61.25px;top:519.5px" width="19" height="14" viewBox="0 0 19 14"><path d="M3.500 3h4.500l2.500 2.500v6h-7z" fill="none" stroke="#e4e4e4" stroke-width="1"/><rect x="5" y="6" width="3" height="3" fill="#e4e4e4"/><path d="M12.500 6h4l-2 2.500z" fill="#e4e4e4"/></svg>
<svg style="left:82.5px;top:519.5px" width="14.5" height="14" viewBox="0 0 14.5 14"><path d="M4 3h4.500l2.500 2.500v6h-7z" fill="none" stroke="#e4e4e4" stroke-width="1"/><path d="M6 7h3M6 9h3" stroke="#e4e4e4" stroke-width=".8"/></svg>
<svg style="left:100px;top:519.5px" width="14.5" height="14" viewBox="0 0 14.5 14"><path d="M3 4h3.500l1 1.200h4.500v6h-9z" fill="#e4e4e4"/></svg>
<svg style="left:117.5px;top:519.5px" width="14.5" height="14" viewBox="0 0 14.5 14"><rect x="3.500" y="5" width="6" height="6" fill="none" stroke="#e4e4e4" stroke-width="1"/><path d="M5.500 5v-1.800h6v6h-2" fill="none" stroke="#e4e4e4" stroke-width="1"/></svg>
<div class="a" style="left:153px;top:48px;width:627px;height:14px;background:#262626;"></div>
<div class="a" style="left:367px;top:49px;width:213px;height:13px;background:#3c3c3c;"></div>
<div class="t" style="left:153px;top:51.5px;font-size:7px;color:#c8c8c8;width:214px;text-align:center">large_1624719848822.jpg</div>
<div class="t" style="left:367px;top:51.5px;font-size:7px;color:#dcdcdc;width:213px;text-align:center">screenshot.png</div>
<div class="a" style="left:153px;top:62px;width:627px;height:462px;background:#494745;"></div>
<div class="a" style="left:180.1px;top:134.8px;width:569.1px;height:312.3px;background:#fff;"></div>
<svg style="left:0;top:0" width="1024" height="576" viewBox="0 0 1024 576"><defs><clipPath id="cv"><rect x="180.1" y="134.800" width="569.100" height="312.300"/></clipPath></defs><g clip-path="url(#cv)"><g id="artg"><circle cx="341.7" cy="188.4" r="31.5" fill="#ffd0d0"/><circle cx="523.8" cy="224" r="31.5" fill="#ffd0d0"/><circle cx="271.6" cy="411.2" r="31.5" fill="#ffd0d0"/><circle cx="588.3" cy="409.1" r="31.5" fill="#ffd0d0"/><defs>
<linearGradient id="a1" gradientUnits="userSpaceOnUse" x1="211.3" y1="239" x2="258.6" y2="205.1"><stop offset="0" stop-color="#ee0559"/><stop offset=".86" stop-color="#f60b66"/><stop offset="1" stop-color="#fc5a98"/></linearGradient>
<linearGradient id="a2" gradientUnits="userSpaceOnUse" x1="226.5" y1="248.6" x2="267.1" y2="220.4"><stop offset="0" stop-color="#ee0559"/><stop offset=".86" stop-color="#f60b66"/><stop offset="1" stop-color="#fc5a98"/></linearGradient>
<linearGradient id="a3" gradientUnits="userSpaceOnUse" x1="404.6" y1="203.4" x2="460.4" y2="175.8"><stop offset="0" stop-color="#ee0559"/><stop offset=".86" stop-color="#f60b66"/><stop offset="1" stop-color="#fc5a98"/></linearGradient>
<linearGradient id="a4" gradientUnits="userSpaceOnUse" x1="418.7" y1="214.1" x2="470.6" y2="193.3"><stop offset="0" stop-color="#ee0559"/><stop offset=".86" stop-color="#f60b66"/><stop offset="1" stop-color="#fc5a98"/></linearGradient>
<linearGradient id="b1" gradientUnits="userSpaceOnUse" x1="213" y1="337.4" x2="239.4" y2="374.2"><stop offset="0" stop-color="#ee0559"/><stop offset=".86" stop-color="#f60b66"/><stop offset="1" stop-color="#fc5a98"/></linearGradient>
<linearGradient id="b2" gradientUnits="userSpaceOnUse" x1="227.2" y1="329" x2="253.3" y2="364.4"><stop offset="0" stop-color="#ee0559"/><stop offset=".86" stop-color="#f60b66"/><stop offset="1" stop-color="#fc5a98"/></linearGradient>
<linearGradient id="c1" gradientUnits="userSpaceOnUse" x1="424.9" y1="365.8" x2="475.9" y2="384.6"><stop offset="0" stop-color="#ee0559"/><stop offset=".86" stop-color="#f60b66"/><stop offset="1" stop-color="#fc5a98"/></linearGradient>
<linearGradient id="c2" gradientUnits="userSpaceOnUse" x1="418.8" y1="385.2" x2="453.5" y2="398.8"><stop offset="0" stop-color="#ee0559"/><stop offset=".86" stop-color="#f60b66"/><stop offset="1" stop-color="#fc5a98"/></linearGradient>
<linearGradient id="w1" gradientUnits="userSpaceOnUse" x1="644.8" y1="353.8" x2="718.3" y2="339.4"><stop offset="0" stop-color="#ee0559"/><stop offset=".86" stop-color="#f60b66"/><stop offset="1" stop-color="#fc5a98"/></linearGradient>
<linearGradient id="w2" gradientUnits="userSpaceOnUse" x1="638.6" y1="370.2" x2="723.8" y2="355.6"><stop offset="0" stop-color="#ee0559"/><stop offset=".86" stop-color="#f60b66"/><stop offset="1" stop-color="#fc5a98"/></linearGradient>
<linearGradient id="d1" gradientUnits="userSpaceOnUse" x1="594.9" y1="268.8" x2="614.2" y2="276.6"><stop offset="0" stop-color="#ee0559"/><stop offset=".86" stop-color="#f60b66"/><stop offset="1" stop-color="#fc5a98"/></linearGradient>
<linearGradient id="d2" gradientUnits="userSpaceOnUse" x1="591.8" y1="279.2" x2="614.2" y2="288"><stop offset="0" stop-color="#ee0559"/><stop offset=".86" stop-color="#f60b66"/><stop offset="1" stop-color="#fc5a98"/></linearGradient>
</defs>
<path fill="url(#a1)" d="M214.4 241.1 L214.8 240.4 L215.5 239.6 L216.2 238.5 L217.0 237.4 L217.8 236.2 L218.7 235.0 L219.7 233.7 L220.6 232.5 L221.5 231.3 L222.4 230.2 L223.3 229.1 L224.3 228.0 L225.2 226.8 L226.2 225.7 L227.2 224.6 L228.2 223.5 L229.2 222.4 L230.2 221.4 L231.1 220.5 L232.1 219.6 L233.1 218.8 L234.1 218.0 L235.1 217.3 L236.2 216.6 L237.2 215.9 L238.3 215.2 L239.4 214.6 L240.4 214.0 L241.5 213.4 L242.5 212.9 L243.4 212.4 L244.4 212.0 L245.3 211.6 L246.2 211.2 L247.2 210.9 L248.1 210.6 L249.0 210.3 L249.9 210.0 L250.8 209.7 L251.6 209.5 L252.3 209.2 L253.1 209.0 L253.9 208.8 L254.7 208.7 L255.5 208.5 L256.2 208.4 L257.0 208.2 L257.6 208.1 L258.3 208.0 L258.7 207.9 A2.9 2.9 0 0 0 258.5 202.3 L258.5 202.3 L258.0 202.2 L257.5 202.1 L256.9 202.1 L256.1 202.0 L255.2 201.9 L254.3 201.8 L253.2 201.7 L252.2 201.7 L251.1 201.8 L250.0 201.9 L249.0 202.1 L248.0 202.3 L246.9 202.5 L245.8 202.8 L244.7 203.1 L243.5 203.4 L242.3 203.8 L241.1 204.2 L239.9 204.7 L238.7 205.3 L237.5 205.9 L236.4 206.5 L235.1 207.2 L233.9 207.9 L232.7 208.6 L231.4 209.4 L230.2 210.3 L228.9 211.2 L227.7 212.2 L226.5 213.2 L225.3 214.3 L224.2 215.4 L223.0 216.6 L221.9 217.8 L220.9 219.0 L219.8 220.3 L218.8 221.5 L217.8 222.8 L216.9 224.0 L216.0 225.2 L215.0 226.4 L214.1 227.8 L213.2 229.1 L212.3 230.5 L211.4 231.9 L210.6 233.2 L209.9 234.3 L209.2 235.4 L208.7 236.2 L208.2 236.9 A3.7 3.7 0 0 0 214.4 241.1Z"/>
<path fill="url(#a2)" d="M229.6 250.6 L230.0 250.0 L230.5 249.2 L231.1 248.3 L231.7 247.4 L232.3 246.4 L233.0 245.3 L233.7 244.3 L234.4 243.3 L235.1 242.4 L235.8 241.5 L236.5 240.7 L237.3 239.8 L238.1 238.9 L239.0 238.0 L239.8 237.1 L240.7 236.3 L241.5 235.4 L242.4 234.6 L243.3 233.9 L244.2 233.1 L245.1 232.5 L246.0 231.8 L246.9 231.2 L247.9 230.6 L248.9 230.0 L249.8 229.4 L250.8 228.9 L251.8 228.4 L252.7 227.9 L253.6 227.4 L254.4 227.0 L255.3 226.6 L256.1 226.3 L256.9 226.0 L257.8 225.7 L258.6 225.4 L259.4 225.1 L260.2 224.9 L260.9 224.6 L261.6 224.4 L262.3 224.2 L262.9 224.1 L263.5 223.9 L264.1 223.8 L264.7 223.7 L265.3 223.6 L265.8 223.5 L266.4 223.4 L266.9 223.3 L267.3 223.2 A2.9 2.9 0 0 0 266.9 217.6 L266.9 217.6 L266.6 217.5 L266.2 217.5 L265.7 217.4 L265.1 217.3 L264.4 217.3 L263.7 217.2 L262.8 217.2 L262.0 217.2 L261.1 217.3 L260.2 217.4 L259.3 217.5 L258.4 217.7 L257.5 217.9 L256.5 218.1 L255.5 218.3 L254.5 218.6 L253.4 218.9 L252.4 219.3 L251.3 219.7 L250.2 220.2 L249.1 220.7 L248.1 221.2 L247.0 221.8 L245.9 222.4 L244.7 223.1 L243.6 223.8 L242.5 224.5 L241.4 225.2 L240.3 226.0 L239.2 226.9 L238.2 227.7 L237.1 228.6 L236.1 229.5 L235.1 230.5 L234.1 231.5 L233.1 232.4 L232.2 233.4 L231.3 234.5 L230.4 235.5 L229.6 236.5 L228.7 237.6 L227.9 238.8 L227.2 240.0 L226.4 241.2 L225.8 242.4 L225.1 243.5 L224.6 244.5 L224.1 245.4 L223.7 246.1 L223.4 246.6 A3.7 3.7 0 0 0 229.6 250.6Z"/>
<path fill="url(#a3)" d="M407.4 205.8 L407.9 205.3 L408.6 204.5 L409.3 203.7 L410.1 202.8 L411.0 201.8 L412.0 200.8 L412.9 199.7 L413.9 198.6 L414.9 197.6 L415.9 196.5 L416.9 195.5 L418.0 194.3 L419.1 193.2 L420.2 192.0 L421.3 190.9 L422.4 189.7 L423.5 188.6 L424.6 187.6 L425.7 186.6 L426.8 185.7 L427.9 184.9 L429.0 184.0 L430.2 183.2 L431.4 182.5 L432.5 181.7 L433.7 181.1 L434.8 180.4 L435.9 179.9 L437.0 179.4 L438.1 179.0 L439.1 178.6 L440.2 178.3 L441.3 178.1 L442.3 177.9 L443.4 177.7 L444.5 177.6 L445.7 177.5 L446.8 177.4 L447.9 177.4 L448.9 177.3 L450.0 177.3 L451.1 177.4 L452.3 177.5 L453.5 177.6 L454.7 177.8 L455.9 178.0 L457.1 178.2 L458.1 178.3 L459.0 178.5 L459.8 178.6 A2.9 2.9 0 0 0 461.0 173.0 L461.0 173.0 L460.4 172.8 L459.6 172.5 L458.7 172.2 L457.6 171.7 L456.3 171.3 L455.0 170.9 L453.6 170.5 L452.2 170.1 L450.7 169.8 L449.3 169.7 L447.9 169.6 L446.6 169.6 L445.3 169.6 L443.9 169.7 L442.5 169.8 L441.1 170.0 L439.7 170.2 L438.2 170.6 L436.8 171.0 L435.3 171.4 L433.9 172.0 L432.5 172.6 L431.1 173.3 L429.7 174.1 L428.3 174.9 L427.0 175.7 L425.7 176.6 L424.4 177.5 L423.1 178.5 L421.8 179.5 L420.5 180.5 L419.2 181.7 L418.0 182.8 L416.7 184.0 L415.5 185.3 L414.3 186.5 L413.2 187.7 L412.1 188.9 L411.1 190.0 L410.1 191.1 L409.1 192.2 L408.1 193.3 L407.1 194.5 L406.1 195.7 L405.2 196.8 L404.3 197.9 L403.5 198.8 L402.8 199.7 L402.3 200.4 L401.8 201.0 A3.7 3.7 0 0 0 407.4 205.8Z"/>
<path fill="url(#a4)" d="M421.8 216.0 L422.3 215.4 L422.8 214.5 L423.3 213.6 L423.9 212.6 L424.6 211.5 L425.3 210.4 L426.0 209.3 L426.7 208.3 L427.4 207.5 L428.2 206.7 L428.9 205.9 L429.8 205.2 L430.8 204.4 L431.8 203.6 L432.9 202.8 L434.0 202.1 L435.1 201.4 L436.2 200.7 L437.3 200.1 L438.4 199.5 L439.5 199.0 L440.6 198.6 L441.7 198.1 L442.9 197.7 L444.1 197.3 L445.2 197.0 L446.4 196.7 L447.6 196.4 L448.7 196.1 L449.8 195.9 L450.9 195.7 L451.9 195.5 L452.9 195.4 L454.0 195.3 L455.0 195.3 L456.0 195.2 L457.1 195.2 L458.1 195.2 L459.2 195.2 L460.2 195.2 L461.2 195.2 L462.2 195.3 L463.3 195.3 L464.5 195.5 L465.6 195.6 L466.7 195.7 L467.7 195.8 L468.6 195.9 L469.4 196.0 L470.1 196.1 A2.9 2.9 0 0 0 471.1 190.5 L471.1 190.5 L470.6 190.3 L469.8 190.1 L468.9 189.9 L467.9 189.6 L466.8 189.3 L465.6 189.0 L464.4 188.7 L463.1 188.4 L461.9 188.2 L460.6 188.0 L459.5 187.9 L458.3 187.8 L457.2 187.8 L456.0 187.7 L454.8 187.7 L453.5 187.8 L452.3 187.8 L451.0 187.9 L449.7 188.1 L448.4 188.3 L447.1 188.6 L445.8 188.8 L444.5 189.2 L443.1 189.5 L441.7 189.9 L440.4 190.4 L439.0 190.9 L437.7 191.4 L436.3 192.0 L435.0 192.7 L433.7 193.3 L432.4 194.1 L431.1 194.8 L429.8 195.6 L428.5 196.5 L427.2 197.4 L426.0 198.3 L424.9 199.3 L423.7 200.3 L422.6 201.3 L421.6 202.5 L420.6 203.7 L419.7 205.0 L418.9 206.3 L418.1 207.6 L417.4 208.8 L416.8 209.9 L416.3 210.8 L415.9 211.6 L415.6 212.2 A3.7 3.7 0 0 0 421.8 216.0Z"/>
<path fill="url(#b1)" d="M209.7 339.3 L210.1 340.2 L210.8 341.3 L211.5 342.7 L212.3 344.2 L213.2 345.9 L214.2 347.6 L215.1 349.3 L216.1 351.0 L217.0 352.7 L217.9 354.1 L218.7 355.5 L219.5 356.8 L220.3 358.2 L221.2 359.5 L222.0 360.8 L222.8 362.1 L223.7 363.3 L224.6 364.6 L225.5 365.8 L226.5 367.0 L227.6 368.2 L228.8 369.4 L230.0 370.6 L231.3 371.7 L232.5 372.8 L233.6 373.7 L234.7 374.6 L235.7 375.4 L236.5 376.1 L237.1 376.6 A3.4 3.4 0 0 0 241.7 371.8 L241.7 371.8 L241.2 371.2 L240.4 370.4 L239.6 369.5 L238.7 368.5 L237.7 367.4 L236.6 366.3 L235.6 365.1 L234.6 364.0 L233.7 362.9 L232.9 361.8 L232.1 360.8 L231.3 359.7 L230.5 358.6 L229.7 357.4 L229.0 356.2 L228.2 355.0 L227.4 353.8 L226.6 352.5 L225.7 351.2 L224.9 349.9 L224.0 348.5 L223.1 346.9 L222.1 345.3 L221.1 343.6 L220.1 342.0 L219.2 340.4 L218.3 338.9 L217.5 337.5 L216.9 336.4 L216.3 335.5 A3.9 3.9 0 0 0 209.7 339.3Z"/>
<path fill="url(#b2)" d="M223.4 329.2 L223.4 329.8 L223.3 330.6 L223.3 331.6 L223.3 332.8 L223.3 334.2 L223.3 335.7 L223.4 337.3 L223.6 338.9 L223.9 340.6 L224.5 342.2 L225.0 343.7 L225.7 345.1 L226.4 346.5 L227.2 347.9 L228.0 349.4 L229.0 350.8 L230.1 352.2 L231.2 353.6 L232.5 355.0 L233.9 356.3 L235.5 357.7 L237.4 359.0 L239.4 360.3 L241.5 361.6 L243.5 362.8 L245.6 363.9 L247.4 365.0 L249.1 365.9 L250.5 366.6 L251.5 367.2 A3.4 3.4 0 0 0 255.1 361.6 L255.1 361.6 L254.1 360.9 L252.7 360.0 L251.1 358.9 L249.4 357.7 L247.5 356.5 L245.6 355.2 L243.8 353.9 L242.1 352.6 L240.7 351.4 L239.5 350.3 L238.5 349.2 L237.5 348.2 L236.6 347.1 L235.8 345.9 L235.0 344.8 L234.3 343.7 L233.7 342.6 L233.1 341.5 L232.6 340.4 L232.1 339.4 L231.8 338.5 L231.6 337.5 L231.4 336.4 L231.3 335.2 L231.2 334.0 L231.2 332.8 L231.1 331.7 L231.1 330.6 L231.1 329.6 L231.0 328.8 A3.9 3.9 0 0 0 223.4 329.2Z"/>
<path fill="url(#c1)" d="M421.1 366.0 L421.1 366.5 L421.1 367.3 L421.0 368.3 L421.0 369.4 L421.0 370.8 L421.0 372.2 L421.1 373.7 L421.4 375.3 L421.8 376.9 L422.4 378.4 L423.1 379.8 L423.8 381.1 L424.6 382.3 L425.6 383.6 L426.6 384.8 L427.7 386.0 L428.9 387.2 L430.2 388.3 L431.6 389.3 L433.0 390.3 L434.6 391.1 L436.3 391.9 L438.0 392.6 L439.7 393.2 L441.6 393.8 L443.4 394.3 L445.2 394.7 L447.1 395.0 L448.9 395.3 L450.6 395.5 L452.4 395.6 L454.2 395.5 L455.9 395.4 L457.6 395.2 L459.3 394.9 L460.9 394.6 L462.4 394.2 L463.9 393.8 L465.3 393.4 L466.6 393.0 L468.0 392.4 L469.4 391.8 L470.7 391.1 L472.0 390.4 L473.1 389.7 L474.1 389.0 L475.1 388.3 L475.9 387.7 L476.5 387.3 L477.0 386.9 A2.6 2.6 0 0 0 474.8 382.3 L474.8 382.3 L474.1 382.5 L473.3 382.8 L472.3 383.2 L471.3 383.5 L470.2 383.9 L469.1 384.3 L467.9 384.6 L466.8 385.0 L465.7 385.2 L464.6 385.4 L463.4 385.6 L462.1 385.9 L460.7 386.1 L459.4 386.3 L458.0 386.4 L456.6 386.5 L455.3 386.6 L454.0 386.7 L452.7 386.6 L451.4 386.5 L450.0 386.4 L448.6 386.1 L447.0 385.9 L445.5 385.5 L443.9 385.2 L442.4 384.7 L441.0 384.3 L439.7 383.8 L438.4 383.3 L437.4 382.7 L436.4 382.2 L435.5 381.5 L434.6 380.8 L433.7 380.0 L432.9 379.2 L432.1 378.3 L431.4 377.4 L430.8 376.6 L430.2 375.7 L429.8 375.0 L429.5 374.3 L429.3 373.6 L429.1 372.6 L429.0 371.6 L428.9 370.5 L428.8 369.4 L428.8 368.3 L428.8 367.3 L428.8 366.4 L428.7 365.6 A3.9 3.9 0 0 0 421.1 366.0Z"/>
<path fill="url(#c2)" d="M416.5 388.3 L416.9 388.6 L417.5 389.2 L418.3 389.8 L419.1 390.6 L420.1 391.4 L421.2 392.2 L422.3 393.1 L423.4 394.0 L424.6 394.8 L425.8 395.6 L427.0 396.2 L428.2 396.9 L429.4 397.5 L430.7 398.2 L432.0 398.8 L433.4 399.4 L434.7 399.9 L436.1 400.4 L437.5 400.8 L439.0 401.2 L440.6 401.5 L442.2 401.7 L443.9 401.8 L445.5 401.9 L447.2 401.9 L448.7 401.9 L450.1 401.9 L451.4 401.9 L452.4 401.9 L453.1 401.9 A3.1 3.1 0 0 0 453.9 395.7 L453.9 395.7 L453.0 395.5 L452.0 395.3 L450.7 395.1 L449.4 394.8 L448.0 394.5 L446.5 394.2 L445.0 393.8 L443.6 393.5 L442.3 393.1 L441.2 392.8 L440.1 392.4 L438.9 392.0 L437.8 391.6 L436.6 391.2 L435.4 390.7 L434.3 390.3 L433.2 389.8 L432.0 389.3 L431.0 388.8 L430.0 388.2 L429.0 387.7 L428.1 387.1 L427.1 386.5 L426.0 385.8 L425.1 385.1 L424.1 384.4 L423.2 383.7 L422.4 383.1 L421.7 382.6 L421.1 382.1 A3.9 3.9 0 0 0 416.5 388.3Z"/>
<path fill="url(#w1)" d="M642.8 356.8 L643.4 357.2 L644.1 357.7 L644.9 358.3 L645.9 359.0 L647.0 359.8 L648.2 360.6 L649.5 361.4 L650.8 362.1 L652.2 362.9 L653.6 363.5 L655.0 364.0 L656.4 364.5 L657.9 364.9 L659.4 365.4 L660.9 365.7 L662.5 366.1 L664.1 366.4 L665.7 366.6 L667.3 366.8 L668.9 366.8 L670.4 366.9 L672.0 366.8 L673.6 366.7 L675.3 366.6 L676.9 366.4 L678.5 366.1 L680.1 365.8 L681.7 365.3 L683.2 364.8 L684.7 364.2 L686.2 363.4 L687.5 362.5 L688.7 361.5 L689.9 360.5 L690.9 359.5 L691.8 358.5 L692.7 357.5 L693.6 356.5 L694.4 355.6 L695.2 354.8 L696.1 353.8 L697.0 352.8 L697.8 351.8 L698.6 350.9 L699.3 350.0 L700.0 349.1 L700.7 348.4 L701.3 347.7 L701.9 347.1 L702.5 346.6 L703.2 346.2 L703.9 345.7 L704.7 345.3 L705.5 344.9 L706.3 344.6 L707.1 344.3 L708.0 344.0 L708.8 343.7 L709.7 343.4 L710.5 343.2 L711.2 343.0 L711.9 342.9 L712.8 342.7 L713.7 342.6 L714.6 342.5 L715.4 342.4 L716.3 342.4 L717.0 342.3 L717.7 342.3 L718.3 342.2 A2.9 2.9 0 0 0 718.3 336.6 L718.3 336.6 L717.8 336.5 L717.2 336.4 L716.5 336.3 L715.6 336.2 L714.6 336.1 L713.6 336.0 L712.4 335.9 L711.3 335.9 L710.1 336.0 L708.9 336.2 L707.9 336.4 L706.9 336.6 L705.8 336.9 L704.7 337.3 L703.6 337.7 L702.5 338.1 L701.4 338.6 L700.3 339.2 L699.2 339.8 L698.1 340.6 L697.0 341.4 L696.0 342.4 L695.1 343.3 L694.3 344.3 L693.5 345.2 L692.7 346.2 L692.0 347.1 L691.3 348.0 L690.6 348.8 L689.8 349.6 L688.9 350.5 L688.0 351.5 L687.1 352.5 L686.3 353.4 L685.5 354.3 L684.7 355.1 L683.9 355.8 L683.1 356.5 L682.3 357.0 L681.5 357.4 L680.6 357.8 L679.5 358.2 L678.3 358.5 L677.1 358.8 L675.8 359.0 L674.5 359.1 L673.1 359.3 L671.7 359.3 L670.4 359.4 L669.1 359.4 L667.9 359.3 L666.6 359.2 L665.3 359.0 L663.9 358.7 L662.6 358.4 L661.3 358.1 L660.0 357.7 L658.7 357.3 L657.5 356.9 L656.4 356.5 L655.4 356.1 L654.3 355.6 L653.2 355.0 L652.1 354.3 L651.1 353.6 L650.0 353.0 L649.1 352.3 L648.2 351.7 L647.4 351.2 L646.8 350.8 A3.6 3.6 0 0 0 642.8 356.8Z"/>
<path fill="url(#w2)" d="M635.9 372.6 L636.4 373.1 L636.9 373.8 L637.6 374.6 L638.4 375.6 L639.3 376.7 L640.3 377.8 L641.4 378.9 L642.6 380.0 L643.9 381.1 L645.3 382.0 L646.7 382.8 L648.1 383.5 L649.5 384.1 L651.1 384.7 L652.6 385.3 L654.3 385.7 L655.9 386.2 L657.5 386.6 L659.2 386.9 L660.8 387.1 L662.5 387.3 L664.2 387.4 L665.9 387.5 L667.7 387.4 L669.4 387.4 L671.1 387.3 L672.8 387.1 L674.5 386.9 L676.1 386.7 L677.6 386.4 L679.1 386.1 L680.6 385.7 L682.0 385.3 L683.5 384.8 L684.9 384.4 L686.2 383.8 L687.6 383.2 L688.8 382.6 L690.1 381.9 L691.4 381.2 L692.6 380.4 L693.8 379.5 L694.9 378.6 L696.0 377.6 L696.9 376.7 L697.9 375.7 L698.8 374.8 L699.7 373.8 L700.5 373.0 L701.4 372.1 L702.4 371.1 L703.4 370.0 L704.4 369.0 L705.3 367.9 L706.2 366.9 L707.1 366.0 L708.0 365.1 L708.8 364.3 L709.6 363.6 L710.3 363.0 L711.0 362.6 L711.8 362.1 L712.6 361.7 L713.4 361.3 L714.3 361.0 L715.1 360.7 L716.0 360.4 L716.8 360.1 L717.7 359.8 L718.4 359.6 L719.0 359.4 L719.6 359.2 L720.1 359.1 L720.7 358.9 L721.3 358.8 L721.9 358.7 L722.4 358.6 L723.0 358.6 L723.5 358.5 L723.9 358.4 A2.9 2.9 0 0 0 723.7 352.8 L723.7 352.8 L723.4 352.7 L723.0 352.7 L722.5 352.6 L721.9 352.5 L721.2 352.4 L720.4 352.3 L719.5 352.3 L718.6 352.3 L717.6 352.4 L716.6 352.6 L715.7 352.8 L714.8 353.1 L713.8 353.3 L712.8 353.6 L711.7 354.0 L710.6 354.4 L709.4 354.9 L708.3 355.5 L707.1 356.2 L705.9 357.0 L704.8 357.8 L703.7 358.8 L702.6 359.8 L701.6 360.8 L700.7 361.9 L699.7 362.9 L698.8 363.9 L697.9 364.9 L697.0 365.9 L696.2 366.7 L695.2 367.7 L694.3 368.6 L693.4 369.6 L692.5 370.5 L691.7 371.3 L690.8 372.1 L690.0 372.9 L689.2 373.6 L688.3 374.2 L687.4 374.8 L686.5 375.4 L685.4 375.9 L684.4 376.4 L683.3 376.9 L682.2 377.3 L681.1 377.7 L679.9 378.1 L678.7 378.5 L677.5 378.8 L676.2 379.0 L674.9 379.3 L673.5 379.5 L672.0 379.6 L670.5 379.8 L669.0 379.9 L667.5 379.9 L666.0 380.0 L664.5 379.9 L663.1 379.8 L661.8 379.7 L660.4 379.5 L659.1 379.2 L657.7 378.9 L656.3 378.5 L655.0 378.1 L653.7 377.7 L652.4 377.2 L651.2 376.6 L650.1 376.1 L649.1 375.6 L648.3 375.0 L647.4 374.4 L646.5 373.6 L645.6 372.7 L644.8 371.8 L643.9 370.8 L643.2 370.0 L642.5 369.1 L641.8 368.4 L641.3 367.8 A3.6 3.6 0 0 0 635.9 372.6Z"/>
<path fill="url(#d1)" d="M594.0 272.1 L594.5 272.3 L595.3 272.5 L596.1 272.7 L596.9 272.9 L597.9 273.2 L598.9 273.5 L599.9 273.8 L600.9 274.1 L601.8 274.4 L602.7 274.7 L603.6 275.0 L604.7 275.4 L605.9 275.9 L607.1 276.4 L608.3 276.9 L609.4 277.4 L610.5 277.9 L611.5 278.3 L612.4 278.6 L613.0 278.9 A2.6 2.6 0 0 0 615.4 274.3 L615.4 274.3 L614.8 273.9 L614.1 273.5 L613.2 272.9 L612.2 272.2 L611.1 271.5 L609.9 270.8 L608.7 270.1 L607.6 269.4 L606.4 268.8 L605.3 268.3 L604.2 267.8 L603.1 267.4 L601.9 267.1 L600.8 266.7 L599.7 266.5 L598.7 266.2 L597.8 266.0 L597.0 265.8 L596.3 265.6 L595.8 265.5 A3.5 3.5 0 0 0 594.0 272.1Z"/>
<path fill="url(#d2)" d="M590.9 282.5 L591.6 282.7 L592.4 283.0 L593.5 283.2 L594.6 283.6 L595.8 283.9 L597.0 284.2 L598.3 284.6 L599.5 285.0 L600.7 285.4 L601.7 285.7 L602.8 286.1 L604.0 286.6 L605.3 287.1 L606.6 287.6 L607.9 288.1 L609.2 288.7 L610.4 289.2 L611.4 289.6 L612.3 290.0 L613.0 290.3 A2.6 2.6 0 0 0 615.4 285.7 L615.4 285.7 L614.7 285.3 L613.9 284.8 L613.0 284.2 L611.9 283.5 L610.7 282.8 L609.4 282.0 L608.1 281.3 L606.8 280.5 L605.5 279.9 L604.3 279.3 L603.0 278.8 L601.7 278.3 L600.3 277.9 L598.9 277.5 L597.6 277.1 L596.4 276.8 L595.2 276.5 L594.2 276.3 L593.4 276.1 L592.7 275.9 A3.5 3.5 0 0 0 590.9 282.5Z"/><defs><linearGradient id="pg" gradientUnits="userSpaceOnUse" x1="0" y1="215" x2="0" y2="375"><stop offset="0" stop-color="#ff44c8"/><stop offset=".55" stop-color="#ff3cbc"/><stop offset=".82" stop-color="#ff38a6"/><stop offset="1" stop-color="#ff3692"/></linearGradient></defs>
<path fill="url(#pg)" fill-rule="nonzero" d="M271.3 278.5 L271.9 278.2 L272.6 277.7 L273.6 277.2 L274.7 276.5 L275.9 275.8 L277.1 275.0 L278.4 274.1 L279.7 273.2 L280.9 272.2 L282.0 271.1 L283.0 270.0 L283.9 268.9 L284.7 267.7 L285.5 266.5 L286.3 265.2 L287.0 264.0 L287.7 262.6 L288.2 261.2 L288.7 259.8 L289.1 258.4 L289.4 257.0 L289.6 255.5 L289.7 254.0 L289.8 252.5 L289.8 251.0 L289.6 249.5 L289.4 247.9 L289.1 246.4 L288.7 244.9 L288.2 243.5 L287.6 242.1 L286.9 240.7 L286.1 239.4 L285.3 238.1 L284.3 236.8 L283.3 235.6 L282.2 234.4 L281.0 233.4 L279.8 232.4 L278.5 231.5 L277.1 230.7 L275.7 230.1 L274.2 229.6 L272.8 229.2 L271.2 228.9 L269.7 228.6 L268.2 228.4 L266.7 228.3 L265.3 228.2 L263.8 228.2 L262.4 228.2 L260.9 228.2 L259.4 228.3 L257.9 228.5 L256.3 228.7 L254.8 229.1 L253.2 229.5 L251.6 229.9 L250.1 230.5 L248.5 231.2 L247.0 232.0 L245.5 232.8 L244.0 233.8 L242.4 234.8 L241.0 235.9 L239.5 237.2 L238.1 238.5 L236.8 239.9 L235.6 241.5 L234.6 243.1 L233.6 244.9 L232.9 246.8 L232.3 248.6 L231.9 250.5 L231.5 252.4 L231.3 254.2 L231.2 256.1 L231.2 257.9 L231.2 259.7 L231.3 261.5 L231.5 263.2 L231.8 265.0 L232.1 266.8 L232.6 268.6 L233.1 270.4 L233.8 272.3 L234.6 274.1 L235.5 275.9 L236.5 277.8 L237.7 279.6 L239.0 281.4 L240.5 283.1 L242.0 284.7 L243.5 286.2 L245.1 287.6 L246.7 288.9 L248.2 290.2 L249.7 291.4 L251.2 292.5 L252.6 293.6 L254.1 294.8 L255.6 295.9 L257.0 296.9 L258.4 297.8 L259.7 298.7 L260.9 299.4 L262.0 300.2 L263.1 300.9 L264.1 301.6 L265.3 302.4 L266.7 303.5 L268.3 304.5 L269.9 305.6 L271.4 306.6 L272.8 307.7 L274.2 308.6 L275.4 309.6 L276.5 310.5 L277.3 311.3 L278.0 312.1 L278.6 313.0 L279.2 314.1 L279.7 315.3 L280.2 316.6 L280.7 317.9 L281.0 319.3 L281.4 320.6 L281.6 322.0 L281.8 323.2 L281.9 324.4 L282.0 325.4 L282.0 326.4 L281.9 327.5 L281.8 328.5 L281.6 329.6 L281.3 330.7 L281.0 331.8 L280.6 332.9 L280.2 334.0 L279.7 335.0 L279.2 335.9 L278.6 336.9 L277.9 338.0 L277.1 339.0 L276.2 340.0 L275.3 341.0 L274.4 341.9 L273.5 342.7 L272.6 343.4 L271.7 343.9 L270.9 344.4 L270.0 344.7 L269.1 345.0 L268.1 345.2 L267.1 345.3 L266.0 345.4 L264.9 345.5 L263.8 345.4 L262.7 345.4 L261.6 345.3 L260.4 345.1 L259.2 345.0 L258.1 344.8 L256.9 344.5 L255.8 344.2 L254.7 343.8 L253.6 343.4 L252.7 343.0 L251.8 342.5 L251.1 342.0 L250.3 341.4 L249.5 340.6 L248.7 339.7 L247.9 338.8 L247.2 337.8 L246.5 336.8 L245.8 335.7 L245.3 334.7 L244.9 333.7 L244.5 332.9 L244.3 332.0 L244.1 331.2 L244.0 330.3 L243.9 329.5 L243.9 328.6 L244.0 327.8 L244.1 327.0 L244.3 326.2 L244.5 325.5 L244.8 324.7 L245.1 324.0 L245.6 323.2 L246.2 322.4 L246.9 321.5 L247.7 320.7 L248.5 319.8 L249.5 318.9 L250.4 318.1 L251.4 317.3 L252.4 316.5 L253.3 315.9 L254.2 315.3 L255.2 314.8 L256.2 314.2 L257.3 313.7 L258.5 313.2 L259.8 312.6 L261.2 312.1 L262.6 311.4 L264.1 310.8 L265.7 310.0 L267.4 309.3 L269.1 308.6 L271.0 307.8 L272.8 307.0 L274.7 306.2 L276.6 305.4 L278.5 304.6 L280.4 303.8 L282.1 303.1 L283.8 302.4 L285.5 301.7 L287.2 301.1 L288.9 300.4 L290.5 299.7 L292.2 299.1 L293.9 298.4 L295.6 297.6 L297.3 296.9 L299.1 296.0 L300.8 295.2 L302.4 294.3 L304.1 293.4 L305.7 292.4 L307.3 291.5 L308.9 290.6 L310.4 289.7 L311.9 288.8 L313.3 288.0 L314.7 287.2 L316.1 286.4 L317.5 285.7 L318.8 284.9 L320.2 284.2 L321.4 283.5 L322.7 282.8 L324.0 282.2 L325.2 281.5 L326.5 280.9 L327.8 280.3 L329.2 279.6 L330.8 278.9 L332.5 278.2 L334.2 277.5 L335.9 276.7 L337.6 276.1 L339.1 275.4 L340.6 274.8 L341.8 274.3 L342.7 273.9 A6.5 6.5 0 0 0 337.3 262.1 L337.3 262.1 L336.4 262.5 L335.3 263.1 L333.9 263.7 L332.4 264.4 L330.7 265.3 L329.0 266.1 L327.2 267.0 L325.4 267.9 L323.7 268.8 L322.2 269.7 L320.7 270.6 L319.4 271.5 L318.0 272.4 L316.8 273.3 L315.5 274.2 L314.3 275.1 L313.1 276.0 L311.9 276.9 L310.6 277.8 L309.3 278.8 L307.9 279.8 L306.5 280.9 L305.1 282.0 L303.7 283.1 L302.3 284.1 L301.0 285.2 L299.6 286.2 L298.2 287.2 L296.8 288.1 L295.3 289.0 L293.9 289.7 L292.4 290.4 L290.9 291.1 L289.3 291.8 L287.7 292.4 L286.0 293.0 L284.3 293.6 L282.6 294.3 L280.8 295.0 L279.1 295.7 L277.3 296.5 L275.4 297.2 L273.6 298.0 L271.7 298.8 L269.7 299.6 L267.8 300.4 L266.0 301.2 L264.2 302.0 L262.5 302.7 L260.9 303.4 L259.4 304.1 L258.0 304.7 L256.7 305.3 L255.3 305.9 L254.0 306.4 L252.7 307.1 L251.4 307.7 L250.2 308.4 L248.9 309.2 L247.6 310.1 L246.4 311.0 L245.3 311.9 L244.1 312.9 L242.9 313.9 L241.8 315.0 L240.7 316.1 L239.7 317.3 L238.8 318.6 L237.9 319.9 L237.2 321.3 L236.7 322.7 L236.2 324.1 L235.9 325.5 L235.7 326.9 L235.6 328.4 L235.6 329.8 L235.7 331.3 L235.9 332.7 L236.2 334.1 L236.7 335.5 L237.2 337.0 L237.9 338.4 L238.6 339.8 L239.5 341.2 L240.4 342.6 L241.4 343.9 L242.5 345.2 L243.6 346.5 L244.8 347.6 L246.1 348.6 L247.5 349.6 L248.9 350.3 L250.4 351.0 L251.9 351.6 L253.4 352.1 L254.9 352.5 L256.4 352.8 L257.8 353.1 L259.3 353.3 L260.6 353.5 L262.0 353.7 L263.4 353.8 L264.8 353.8 L266.3 353.8 L267.8 353.8 L269.3 353.6 L270.8 353.4 L272.4 353.1 L274.0 352.6 L275.5 352.1 L277.0 351.4 L278.6 350.7 L280.1 349.8 L281.6 348.9 L283.1 347.8 L284.5 346.8 L285.9 345.6 L287.3 344.3 L288.5 343.0 L289.7 341.6 L290.7 340.2 L291.7 338.8 L292.6 337.2 L293.5 335.6 L294.3 333.9 L295.0 332.2 L295.5 330.3 L296.0 328.4 L296.3 326.4 L296.5 324.4 L296.5 322.4 L296.5 320.4 L296.3 318.3 L296.0 316.2 L295.5 314.1 L295.0 312.0 L294.3 309.8 L293.5 307.7 L292.6 305.6 L291.4 303.5 L290.1 301.4 L288.5 299.4 L287.0 297.7 L285.3 296.0 L283.7 294.4 L282.0 293.0 L280.5 291.7 L279.0 290.4 L277.6 289.3 L276.3 288.2 L274.9 287.0 L273.3 285.9 L271.9 285.0 L270.5 284.1 L269.2 283.3 L268.0 282.6 L267.0 282.0 L266.0 281.3 L265.0 280.6 L264.0 279.8 L262.9 278.7 L261.6 277.6 L260.4 276.4 L259.2 275.2 L258.0 274.0 L257.0 272.8 L256.0 271.7 L255.2 270.6 L254.5 269.7 L253.9 268.8 L253.5 268.0 L253.0 267.1 L252.6 266.2 L252.2 265.2 L251.9 264.3 L251.6 263.3 L251.3 262.3 L251.1 261.2 L250.9 260.2 L250.7 259.1 L250.5 258.1 L250.4 257.0 L250.3 256.0 L250.2 255.0 L250.1 254.0 L250.1 253.0 L250.1 252.1 L250.2 251.2 L250.2 250.4 L250.2 249.7 L250.3 248.8 L250.5 247.9 L250.7 246.8 L251.1 245.7 L251.5 244.5 L251.9 243.4 L252.4 242.2 L253.0 241.2 L253.6 240.2 L254.3 239.4 L254.9 238.7 L255.7 238.0 L256.6 237.3 L257.5 236.7 L258.5 236.2 L259.6 235.7 L260.7 235.3 L261.8 235.0 L262.9 234.8 L264.0 234.6 L265.1 234.6 L266.2 234.7 L267.4 234.8 L268.5 235.0 L269.7 235.4 L270.8 235.7 L271.8 236.2 L272.7 236.7 L273.6 237.2 L274.3 237.7 L275.0 238.3 L275.7 239.0 L276.3 239.8 L277.0 240.7 L277.6 241.6 L278.1 242.6 L278.6 243.6 L279.1 244.6 L279.4 245.6 L279.8 246.5 L280.0 247.4 L280.2 248.4 L280.4 249.3 L280.5 250.4 L280.6 251.4 L280.6 252.5 L280.6 253.6 L280.5 254.6 L280.4 255.6 L280.3 256.6 L280.1 257.5 L279.9 258.5 L279.6 259.5 L279.3 260.5 L278.9 261.5 L278.5 262.5 L278.0 263.5 L277.5 264.5 L276.9 265.4 L276.4 266.1 L275.8 266.8 L275.0 267.6 L274.1 268.3 L273.1 269.1 L272.0 269.8 L271.0 270.5 L269.9 271.1 L269.0 271.7 L268.1 272.2 L267.5 272.7 A3.5 3.5 0 0 0 271.3 278.5Z M364.3 270.8 L363.6 270.3 L362.6 269.7 L361.3 268.9 L359.7 267.9 L358.0 266.9 L356.1 265.8 L354.1 264.8 L351.8 264.0 L349.4 263.4 L346.8 263.1 L344.4 263.3 L342.2 263.6 L340.0 264.1 L337.9 264.8 L335.8 265.7 L333.8 266.7 L331.9 267.7 L330.0 268.9 L328.2 270.2 L326.4 271.6 L324.7 273.2 L323.1 275.0 L321.5 276.8 L320.0 278.7 L318.7 280.6 L317.4 282.6 L316.3 284.6 L315.2 286.7 L314.3 288.7 L313.5 290.7 L312.9 292.7 L312.4 294.7 L312.0 296.8 L311.8 298.9 L311.7 301.0 L311.7 303.1 L311.9 305.2 L312.3 307.3 L312.8 309.4 L313.6 311.5 L314.7 313.5 L315.9 315.2 L317.3 316.8 L318.8 318.2 L320.4 319.4 L322.0 320.5 L323.8 321.4 L325.6 322.2 L327.4 322.8 L329.4 323.2 L331.3 323.4 L333.3 323.4 L335.1 323.2 L336.9 322.9 L338.7 322.4 L340.3 321.9 L342.0 321.3 L343.5 320.6 L345.0 319.9 L346.5 319.0 L348.0 318.0 L349.4 316.7 L350.6 315.5 L351.7 314.2 L352.8 312.9 L353.7 311.6 L354.5 310.5 L355.2 309.5 L355.8 308.8 L356.2 308.2 A4.0 4.0 0 0 0 350.1 303.0 L350.1 303.0 L349.5 303.7 L348.8 304.6 L348.0 305.5 L347.2 306.6 L346.3 307.6 L345.4 308.6 L344.5 309.5 L343.6 310.3 L342.8 310.8 L342.1 311.2 L341.2 311.5 L340.2 311.8 L339.0 312.1 L337.8 312.3 L336.7 312.4 L335.5 312.5 L334.5 312.4 L333.6 312.2 L333.0 312.0 L332.7 311.7 L332.4 311.3 L332.0 310.8 L331.7 310.2 L331.3 309.5 L331.0 308.8 L330.8 308.0 L330.6 307.3 L330.6 306.6 L330.6 306.1 L330.7 305.7 L330.8 305.3 L330.8 304.8 L330.9 304.1 L331.1 303.3 L331.2 302.3 L331.4 301.3 L331.6 300.3 L331.9 299.2 L332.2 298.1 L332.5 297.0 L332.9 295.8 L333.4 294.4 L333.9 293.0 L334.5 291.5 L335.1 289.9 L335.8 288.4 L336.5 287.0 L337.2 285.7 L337.9 284.6 L338.5 283.6 L339.3 282.6 L340.2 281.6 L341.2 280.6 L342.2 279.7 L343.2 278.8 L344.2 278.1 L345.2 277.4 L346.2 276.8 L347.0 276.4 L347.7 276.1 L348.3 275.9 L349.2 275.8 L350.5 276.0 L352.1 276.3 L353.7 276.7 L355.3 277.2 L356.9 277.8 L358.4 278.3 L359.8 278.8 L360.9 279.1 A4.5 4.5 0 0 0 364.3 270.8Z M370.5 269.8 L369.8 270.1 L368.9 270.5 L367.8 271.1 L366.5 271.7 L365.1 272.4 L363.7 273.3 L362.2 274.2 L360.7 275.2 L359.3 276.4 L358.2 277.6 L357.5 278.2 L357.0 278.6 L356.4 279.3 L355.6 280.5 L354.8 282.1 L354.1 283.8 L353.6 285.3 L353.3 286.8 L352.9 288.4 L352.5 290.4 L352.1 292.8 L351.7 295.5 L351.3 298.5 L350.9 301.7 L350.6 305.0 L350.2 308.4 L349.9 311.7 L349.5 315.0 L349.1 318.0 L348.8 320.7 L348.4 323.2 L347.9 325.7 L347.4 328.2 L346.9 330.7 L346.3 333.2 L345.8 335.6 L345.4 338.1 L345.0 340.6 L344.7 343.1 L344.6 345.6 L344.7 348.1 L344.9 350.5 L345.4 352.7 L346.0 354.7 L346.6 356.5 L347.2 358.1 L347.8 359.4 L348.4 360.5 L348.8 361.2 L349.1 361.8 A8.5 8.5 0 0 0 366.1 360.5 L366.1 360.5 L366.2 359.5 L366.4 358.3 L366.7 357.1 L367.0 355.9 L367.4 354.6 L367.8 353.3 L368.2 352.1 L368.6 350.8 L369.0 349.6 L369.4 348.4 L369.8 347.0 L370.3 345.4 L370.8 343.5 L371.3 341.4 L371.9 339.1 L372.5 336.7 L373.2 334.2 L373.8 331.6 L374.5 328.8 L375.3 326.0 L376.0 323.1 L376.8 320.0 L377.6 316.8 L378.5 313.5 L379.3 310.3 L380.1 307.1 L380.9 304.1 L381.6 301.4 L382.2 299.1 L382.7 297.3 L383.2 295.9 L383.5 294.8 L383.7 294.3 L383.7 294.3 L383.5 294.8 L383.2 295.4 L382.9 295.6 L383.0 295.3 L383.3 294.5 L383.6 293.6 L383.6 292.8 L383.7 292.0 L383.9 290.9 L384.1 289.6 L384.4 288.2 L384.8 286.8 L385.1 285.5 L385.4 284.3 L385.8 283.2 L386.0 282.4 A10.0 10.0 0 0 0 370.5 269.8Z M366.3 369.5 L367.0 368.9 L367.9 368.3 L369.0 367.5 L370.3 366.6 L371.7 365.7 L373.2 364.6 L374.7 363.5 L376.2 362.3 L377.7 361.1 L379.1 359.8 L380.5 358.6 L381.9 357.2 L383.3 355.8 L384.7 354.4 L386.0 352.9 L387.3 351.4 L388.6 350.0 L389.8 348.6 L390.9 347.3 L391.9 346.2 L392.7 345.1 L393.4 344.2 L394.0 343.4 L394.6 342.6 L395.1 341.8 L395.5 341.0 L395.9 340.2 L396.4 339.4 L397.0 338.4 L397.6 337.3 L398.4 335.9 L399.3 334.4 L400.3 332.8 L401.3 331.0 L402.3 329.2 L403.4 327.3 L404.5 325.3 L405.5 323.3 L406.5 321.3 L407.5 319.3 L408.4 317.1 L409.3 314.8 L410.2 312.4 L411.1 309.9 L411.9 307.5 L412.7 305.1 L413.4 303.0 L414.1 301.1 L414.6 299.5 L415.0 298.3 A4.5 4.5 0 0 0 406.5 295.3 L406.5 295.3 L406.1 296.6 L405.5 298.2 L404.9 300.1 L404.1 302.3 L403.4 304.6 L402.6 306.9 L401.7 309.3 L400.9 311.6 L400.0 313.7 L399.2 315.7 L398.4 317.5 L397.5 319.4 L396.6 321.2 L395.7 323.1 L394.7 325.0 L393.7 326.8 L392.8 328.5 L391.9 330.2 L391.0 331.7 L390.2 333.1 L389.5 334.3 L389.0 335.3 L388.5 336.2 L388.2 336.9 L387.8 337.4 L387.5 337.9 L387.1 338.5 L386.7 339.1 L386.1 339.8 L385.3 340.7 L384.4 341.8 L383.4 343.0 L382.2 344.3 L381.0 345.6 L379.7 346.9 L378.4 348.3 L377.0 349.6 L375.7 350.8 L374.5 352.0 L373.3 353.0 L372.0 354.0 L370.7 354.9 L369.3 355.9 L367.9 356.8 L366.4 357.7 L365.1 358.5 L363.7 359.3 L362.6 360.0 L361.5 360.6 L360.7 361.2 A5.0 5.0 0 0 0 366.3 369.5Z M450.4 210.0 L449.8 210.1 L449.0 210.1 L448.0 210.2 L446.8 210.3 L445.5 210.5 L444.0 210.8 L442.4 211.3 L440.8 211.9 L439.2 212.8 L437.6 213.9 L436.2 215.0 L434.9 216.2 L433.6 217.5 L432.4 218.8 L431.3 220.2 L430.2 221.5 L429.2 222.9 L428.3 224.3 L427.4 225.7 L426.5 227.2 L425.7 228.7 L424.9 230.4 L424.3 231.9 L423.7 233.5 L423.3 234.9 L422.8 236.3 L422.4 237.5 L422.1 238.6 L421.7 239.6 L421.4 240.4 L421.0 241.2 L420.6 242.0 L420.3 242.8 L419.9 243.6 L419.5 244.5 L419.1 245.4 L418.7 246.5 L418.4 247.5 L418.0 248.7 L417.6 250.0 L417.3 251.5 L417.0 252.9 L416.7 254.3 L416.5 255.5 L416.2 256.7 L416.0 257.8 L415.8 258.7 L415.6 259.5 L415.4 260.2 L415.2 260.8 L415.1 261.4 L414.9 262.2 L414.7 263.0 L414.5 264.0 L414.3 265.0 L414.1 266.1 L413.8 267.3 L413.6 268.6 L413.3 269.9 L413.0 271.2 L412.7 272.4 L412.5 273.6 L412.2 274.8 L411.9 276.0 L411.7 277.2 L411.4 278.5 L411.1 279.8 L410.8 281.1 L410.6 282.5 L410.3 283.9 L410.1 285.2 L409.9 286.5 L409.7 287.9 L409.5 289.3 L409.4 290.8 L409.2 292.2 L409.0 293.7 L408.9 295.2 L408.7 296.7 L408.6 298.1 L408.5 299.6 L408.5 301.1 L408.4 302.5 L408.4 304.0 L408.4 305.3 L408.4 306.7 L408.4 307.9 L408.5 309.2 L408.5 310.3 L408.5 311.4 L408.5 312.6 L408.6 313.8 L408.6 314.9 L408.7 315.9 L408.8 316.9 L408.8 317.8 L408.9 318.6 L408.9 319.2 L409.0 319.7 L409.0 320.1 A12.0 12.0 0 0 0 433.0 319.9 L433.0 319.9 L433.0 319.4 L433.0 318.7 L433.1 318.0 L433.1 317.3 L433.1 316.6 L433.2 315.8 L433.2 315.0 L433.3 314.2 L433.4 313.4 L433.5 312.6 L433.6 311.6 L433.8 310.6 L433.9 309.5 L434.1 308.4 L434.3 307.3 L434.5 306.2 L434.7 305.1 L434.9 304.0 L435.1 302.9 L435.4 301.9 L435.6 300.8 L435.9 299.7 L436.2 298.6 L436.5 297.4 L436.9 296.2 L437.2 295.0 L437.6 293.8 L438.0 292.6 L438.3 291.3 L438.7 290.1 L439.0 289.0 L439.3 287.9 L439.6 286.8 L440.0 285.7 L440.3 284.6 L440.6 283.4 L441.0 282.3 L441.3 281.1 L441.7 279.9 L442.0 278.8 L442.4 277.7 L442.7 276.7 L443.1 275.7 L443.5 274.5 L443.9 273.3 L444.4 272.0 L444.8 270.7 L445.2 269.2 L445.5 267.7 L445.8 266.0 L446.0 264.3 L446.1 262.6 L446.1 261.1 L446.0 259.6 L445.9 258.3 L445.8 257.2 L445.7 256.1 L445.6 255.3 L445.4 254.6 L445.4 254.0 L445.3 253.4 L445.3 252.8 L445.2 252.2 L445.2 251.6 L445.2 251.0 L445.2 250.3 L445.3 249.5 L445.4 248.6 L445.5 247.6 L445.6 246.4 L445.8 245.1 L445.9 243.8 L446.1 242.6 L446.2 241.4 L446.3 240.3 L446.4 239.2 L446.6 238.2 L446.7 237.2 L446.8 236.3 L446.9 235.4 L447.1 234.4 L447.4 233.2 L447.6 232.0 L448.0 230.7 L448.3 229.5 L448.6 228.3 L448.9 227.2 L449.2 226.1 L449.5 225.1 L449.6 224.3 L449.7 223.7 L449.9 222.9 L450.3 222.0 L450.7 221.0 L451.3 220.0 L451.9 219.1 L452.5 218.2 L453.1 217.3 L453.7 216.6 L454.2 216.0 A3.5 3.5 0 0 0 450.4 210.0Z M451.2 216.3 L452.0 216.6 L453.0 217.0 L454.1 217.4 L455.3 217.8 L456.5 218.3 L457.7 218.8 L458.8 219.3 L459.7 219.9 L460.3 220.3 L460.6 220.7 L460.8 221.1 L461.0 221.7 L461.3 222.3 L461.5 223.0 L461.7 223.9 L461.9 224.8 L462.1 225.7 L462.2 226.7 L462.4 227.7 L462.5 228.7 L462.6 229.6 L462.6 230.6 L462.7 231.5 L462.7 232.5 L462.7 233.6 L462.6 234.6 L462.6 235.7 L462.5 236.8 L462.3 237.9 L462.2 238.9 L462.0 240.0 L461.8 241.1 L461.6 242.2 L461.3 243.3 L461.1 244.4 L460.7 245.5 L460.4 246.6 L460.0 247.7 L459.6 248.8 L459.1 249.8 L458.6 250.9 L458.1 252.0 L457.4 253.0 L456.7 254.1 L456.0 255.2 L455.3 256.3 L454.5 257.4 L453.7 258.4 L453.0 259.4 L452.2 260.3 L451.5 261.1 L450.8 261.9 L450.1 262.6 L449.3 263.4 L448.5 264.1 L447.7 264.8 L446.9 265.5 L446.0 266.2 L445.2 267.0 L444.3 267.7 L443.4 268.4 L442.4 269.2 L441.4 269.9 L440.4 270.7 L439.4 271.5 L438.4 272.2 L437.4 272.9 L436.6 273.5 L435.9 274.0 L435.3 274.4 A4.5 4.5 0 0 0 440.7 281.6 L440.7 281.6 L441.2 281.2 L441.9 280.7 L442.7 280.1 L443.6 279.4 L444.7 278.7 L445.7 277.9 L446.8 277.1 L447.9 276.3 L448.9 275.5 L449.9 274.7 L450.8 274.0 L451.7 273.3 L452.6 272.6 L453.6 271.8 L454.5 271.1 L455.5 270.3 L456.5 269.4 L457.4 268.5 L458.4 267.5 L459.4 266.5 L460.3 265.5 L461.2 264.4 L462.1 263.2 L463.1 262.0 L464.0 260.8 L464.9 259.6 L465.7 258.3 L466.5 257.0 L467.3 255.7 L468.1 254.4 L468.7 253.0 L469.4 251.7 L470.0 250.4 L470.6 249.0 L471.1 247.7 L471.6 246.3 L472.0 244.9 L472.4 243.6 L472.7 242.2 L473.0 240.9 L473.3 239.5 L473.5 238.1 L473.6 236.7 L473.8 235.3 L473.9 233.9 L473.9 232.5 L473.8 231.1 L473.7 229.7 L473.6 228.2 L473.3 226.9 L473.0 225.6 L472.7 224.3 L472.3 223.0 L471.8 221.7 L471.2 220.4 L470.6 219.0 L469.8 217.7 L468.9 216.5 L467.9 215.3 L466.6 214.1 L465.1 213.0 L463.6 212.3 L462.0 211.7 L460.4 211.2 L458.9 210.8 L457.4 210.5 L456.1 210.2 L454.9 210.0 L454.0 209.8 L453.4 209.7 A3.5 3.5 0 0 0 451.2 216.3Z M434.6 296.0 L435.5 295.9 L436.6 295.8 L437.9 295.7 L439.3 295.6 L440.7 295.5 L442.2 295.4 L443.5 295.4 L444.6 295.5 L445.3 295.6 L445.7 295.9 L446.0 296.1 L446.4 296.5 L446.6 296.8 L446.7 297.2 L446.7 297.5 L446.7 297.7 L446.6 298.0 L446.6 298.3 L446.5 298.6 L446.5 298.9 L446.6 299.2 L446.7 299.8 L446.9 300.7 L447.1 301.8 L447.3 303.0 L447.4 304.3 L447.4 305.6 L447.4 307.0 L447.3 308.3 L447.0 309.4 L446.7 310.2 L446.1 311.0 L445.5 311.8 L444.8 312.6 L443.9 313.6 L443.1 314.6 L442.2 315.8 L441.3 317.1 L440.5 318.6 L439.9 320.4 L439.5 322.1 L439.2 323.7 L439.0 325.2 L438.9 326.5 L438.8 327.5 L438.8 328.2 L438.7 328.7 L438.7 328.9 L438.6 328.9 L438.5 329.1 L438.5 329.5 L438.4 330.1 L438.3 330.9 L438.2 331.7 L438.1 332.6 L438.0 333.6 L438.0 334.6 L437.9 335.7 L437.8 336.8 L437.7 337.9 L437.6 338.7 L437.5 339.5 L437.5 340.3 L437.4 341.3 L437.2 342.4 L437.1 343.6 L437.0 344.9 L437.0 346.4 L437.0 347.9 L437.0 349.5 L437.1 351.0 L437.2 352.6 L437.4 354.3 L437.6 356.0 L437.8 357.7 L438.1 359.3 L438.4 361.0 L438.7 362.5 L439.1 363.9 L439.6 365.4 L440.2 366.8 L440.9 368.1 L441.8 369.3 L442.7 370.3 L443.5 371.0 L444.4 371.6 L445.1 372.0 L445.7 372.2 L446.1 372.2 L446.4 372.2 A6.0 6.0 0 0 0 457.6 367.8 L457.6 367.8 L457.6 367.2 L457.7 366.5 L457.9 365.8 L458.2 365.2 L458.5 364.7 L458.9 364.3 L459.3 363.9 L459.7 363.5 L460.1 363.1 L460.4 362.6 L460.6 361.9 L460.8 360.8 L461.0 359.6 L461.1 358.2 L461.2 356.8 L461.4 355.4 L461.5 354.0 L461.7 352.7 L461.8 351.5 L462.0 350.5 L462.2 349.8 L462.4 349.1 L462.6 348.5 L462.8 347.8 L463.0 347.1 L463.2 346.3 L463.5 345.4 L463.8 344.4 L464.1 343.3 L464.3 342.1 L464.6 341.1 L464.8 340.2 L465.1 339.3 L465.3 338.2 L465.6 337.2 L465.8 336.0 L466.0 334.9 L466.2 333.6 L466.4 332.3 L466.5 330.9 L466.5 329.3 L466.4 327.8 L466.2 326.5 L466.0 325.5 L465.8 324.7 L465.6 324.3 L465.4 324.0 L465.2 323.9 L465.0 323.8 L464.7 323.6 L464.4 323.3 L464.1 322.7 L463.8 321.7 L463.6 320.5 L463.5 319.2 L463.3 317.6 L463.2 316.0 L463.2 314.2 L463.1 312.4 L463.0 310.6 L462.9 309.0 L462.9 307.4 L462.9 305.7 L462.9 304.0 L462.9 302.3 L462.9 300.5 L462.8 298.6 L462.6 296.8 L462.1 294.9 L461.5 293.1 L460.6 291.5 L459.6 290.1 L458.5 288.8 L457.2 287.6 L455.8 286.7 L454.3 285.9 L452.9 285.2 L451.4 284.8 L449.9 284.4 L448.3 284.1 L446.4 284.0 L444.6 284.0 L442.8 284.2 L441.1 284.5 L439.4 284.8 L437.8 285.1 L436.3 285.4 L435.1 285.7 L434.1 285.9 L433.4 286.0 A5.0 5.0 0 0 0 434.6 296.0Z M430.3 321.7 L430.9 321.9 L431.8 322.1 L432.9 322.3 L434.1 322.5 L435.4 322.8 L436.7 323.0 L437.9 323.3 L439.0 323.5 L439.9 323.7 L440.6 323.8 A5.0 5.0 0 0 0 443.4 314.2 L443.4 314.2 L442.8 314.0 L442.0 313.6 L440.9 313.2 L439.8 312.7 L438.6 312.2 L437.4 311.7 L436.2 311.3 L435.2 310.9 L434.3 310.5 L433.7 310.3 A6.0 6.0 0 0 0 430.3 321.7Z M461.2 373.2 L462.0 372.4 L463.1 371.4 L464.4 370.2 L465.9 368.8 L467.4 367.3 L469.1 365.8 L470.7 364.1 L472.3 362.5 L473.9 360.9 L475.2 359.3 L476.4 357.7 L477.6 356.2 L478.6 354.7 L479.6 353.2 L480.5 351.7 L481.4 350.2 L482.3 348.7 L483.1 347.3 L483.9 345.9 L484.7 344.5 L485.6 343.1 L486.4 341.7 L487.2 340.3 L488.0 338.9 L488.8 337.6 L489.6 336.2 L490.4 334.8 L491.2 333.5 L492.0 332.1 L492.8 330.7 L493.6 329.3 L494.5 327.8 L495.3 326.4 L496.2 324.9 L497.1 323.4 L498.0 321.9 L498.8 320.5 L499.6 319.0 L500.4 317.6 L501.2 316.2 L501.9 314.8 L502.6 313.4 L503.3 312.0 L504.0 310.6 L504.6 309.2 L505.2 307.9 L505.8 306.7 L506.2 305.5 L506.7 304.4 L507.0 303.4 L507.2 302.6 L507.4 301.7 L507.5 300.9 L507.5 300.1 L507.5 299.3 L507.6 298.5 L507.6 297.9 L507.6 297.2 L507.6 296.6 L507.7 296.1 A5.0 5.0 0 0 0 499.1 291.1 L499.1 291.1 L498.8 291.3 L498.3 291.5 L497.8 291.8 L497.1 292.1 L496.4 292.6 L495.6 293.1 L494.9 293.8 L494.1 294.5 L493.3 295.4 L492.6 296.4 L492.0 297.4 L491.3 298.6 L490.7 299.8 L490.1 301.1 L489.5 302.5 L488.9 303.9 L488.3 305.3 L487.8 306.7 L487.2 308.2 L486.6 309.6 L486.1 311.0 L485.5 312.5 L484.9 314.1 L484.4 315.7 L483.8 317.3 L483.3 318.9 L482.7 320.5 L482.2 322.0 L481.6 323.6 L481.0 325.1 L480.5 326.6 L479.9 328.0 L479.3 329.5 L478.7 330.9 L478.2 332.3 L477.6 333.7 L477.0 335.1 L476.4 336.5 L475.7 337.9 L475.1 339.3 L474.4 340.7 L473.6 342.2 L472.9 343.7 L472.2 345.1 L471.5 346.5 L470.7 347.8 L469.9 349.2 L469.1 350.5 L468.3 351.8 L467.4 353.1 L466.3 354.4 L465.1 355.9 L463.7 357.5 L462.3 359.1 L460.8 360.7 L459.3 362.2 L457.9 363.6 L456.7 364.9 L455.6 366.0 L454.8 366.8 A4.5 4.5 0 0 0 461.2 373.2Z M498.5 292.9 L498.2 293.3 L497.8 293.9 L497.3 294.5 L496.8 295.3 L496.3 296.1 L495.7 297.0 L495.2 297.9 L494.7 298.9 L494.2 299.9 L493.8 300.9 L493.4 301.9 L493.1 303.0 L492.7 304.1 L492.4 305.3 L492.1 306.6 L491.8 307.9 L491.5 309.2 L491.3 310.6 L491.0 312.0 L490.8 313.4 L490.6 314.7 L490.4 315.9 L490.1 317.3 L489.9 318.7 L489.7 320.1 L489.5 321.5 L489.5 323.0 L489.5 324.5 L489.6 326.1 L489.9 327.7 L490.5 329.4 L491.3 331.0 L492.3 332.3 L493.3 333.4 L494.2 334.3 L495.2 334.9 L496.0 335.4 L496.7 335.8 L497.2 335.9 L497.5 336.0 A7.0 7.0 0 0 0 510.1 329.8 L510.1 329.8 L510.0 329.1 L510.0 328.3 L510.0 327.5 L510.2 326.7 L510.4 326.0 L510.6 325.4 L510.9 324.8 L511.2 324.4 L511.5 324.2 L511.7 324.1 L511.7 323.8 L511.7 323.1 L511.6 322.4 L511.5 321.5 L511.4 320.4 L511.2 319.3 L511.1 318.2 L511.0 317.0 L510.9 315.8 L510.8 314.6 L510.7 313.6 L510.7 312.5 L510.7 311.3 L510.7 310.2 L510.8 309.0 L510.8 307.8 L510.8 306.6 L510.8 305.4 L510.7 304.2 L510.6 303.1 L510.5 302.1 L510.3 301.0 L510.0 300.0 L509.8 299.0 L509.5 298.0 L509.2 297.1 L508.9 296.3 L508.7 295.5 L508.5 294.8 L508.3 294.3 A5.0 5.0 0 0 0 498.5 292.9Z M502.6 339.8 L503.0 339.8 L503.5 339.7 L504.2 339.8 L505.1 339.8 L506.2 339.8 L507.3 339.8 L508.5 339.8 L509.8 339.8 L511.2 339.7 L512.5 339.5 L513.6 339.3 L514.7 339.0 L515.7 338.7 L516.9 338.4 L518.0 338.1 L519.2 337.6 L520.4 337.1 L521.6 336.5 L522.8 335.8 L524.1 335.0 L525.2 333.9 L526.3 332.8 L527.3 331.6 L528.3 330.4 L529.1 329.2 L529.9 328.0 L530.6 327.0 L531.2 326.1 L531.7 325.4 L532.0 324.9 A5.0 5.0 0 0 0 524.0 319.1 L524.0 319.1 L523.5 319.7 L522.9 320.5 L522.3 321.5 L521.7 322.4 L521.0 323.5 L520.3 324.4 L519.6 325.3 L518.9 326.1 L518.4 326.7 L517.9 327.0 L517.5 327.3 L517.0 327.6 L516.4 327.8 L515.8 328.0 L515.1 328.2 L514.4 328.3 L513.7 328.4 L512.9 328.5 L512.1 328.5 L511.5 328.5 L511.0 328.4 L510.5 328.3 L509.9 328.1 L509.2 327.8 L508.5 327.5 L507.8 327.1 L507.1 326.8 L506.3 326.5 L505.6 326.2 L505.0 326.0 A7.0 7.0 0 0 0 502.6 339.8Z M538.7 290.1 L538.3 290.4 L537.9 290.8 L537.3 291.2 L536.7 291.7 L536.0 292.3 L535.3 293.0 L534.6 293.7 L533.9 294.5 L533.2 295.4 L532.5 296.4 L531.9 297.4 L531.2 298.5 L530.5 299.7 L529.8 301.1 L529.0 302.5 L528.3 303.9 L527.6 305.5 L527.0 307.0 L526.4 308.6 L525.9 310.1 L525.4 311.5 L524.9 313.0 L524.5 314.5 L524.1 316.0 L523.7 317.7 L523.3 319.3 L523.1 321.0 L522.9 322.7 L522.9 324.5 L523.0 326.4 L523.3 328.4 L523.9 330.2 L524.7 331.9 L525.5 333.3 L526.4 334.5 L527.3 335.5 L528.0 336.3 L528.7 336.8 L529.2 337.1 L529.5 337.4 A8.5 8.5 0 0 0 545.9 332.6 L545.9 332.6 L545.9 331.8 L546.0 330.9 L546.1 330.0 L546.3 329.1 L546.6 328.3 L546.9 327.5 L547.2 326.8 L547.5 326.3 L547.8 325.9 L548.0 325.6 L548.1 325.2 L548.2 324.4 L548.3 323.4 L548.3 322.3 L548.4 321.1 L548.4 319.7 L548.4 318.4 L548.5 316.9 L548.5 315.5 L548.5 314.1 L548.5 312.8 L548.5 311.4 L548.5 310.0 L548.5 308.5 L548.5 307.0 L548.4 305.5 L548.4 304.0 L548.3 302.6 L548.2 301.3 L548.1 300.0 L547.9 298.9 L547.7 297.9 L547.4 296.9 L547.1 295.9 L546.8 295.0 L546.4 294.2 L546.1 293.5 L545.9 292.8 L545.7 292.2 L545.5 291.7 A3.5 3.5 0 0 0 538.7 290.1Z M544.9 342.5 L545.3 342.1 L545.8 341.8 L546.6 341.3 L547.4 340.7 L548.4 340.0 L549.4 339.2 L550.5 338.3 L551.6 337.3 L552.7 336.3 L553.8 335.1 L554.8 333.9 L555.8 332.6 L556.8 331.3 L557.8 329.9 L558.8 328.5 L559.7 327.1 L560.6 325.8 L561.5 324.4 L562.4 323.2 L563.2 322.1 L563.9 321.0 L564.6 320.0 L565.4 319.0 L566.1 318.0 L566.8 317.0 L567.5 316.0 L568.2 314.9 L568.9 313.8 L569.5 312.7 L570.2 311.4 L570.9 310.1 L571.5 308.6 L572.1 307.2 L572.7 305.7 L573.2 304.2 L573.8 302.9 L574.2 301.6 L574.6 300.5 L574.9 299.6 L575.2 298.9 A7.5 7.5 0 0 0 561.0 294.1 L561.0 294.1 L560.8 294.9 L560.5 295.9 L560.1 297.0 L559.8 298.2 L559.4 299.6 L559.0 300.9 L558.6 302.3 L558.2 303.6 L557.8 304.7 L557.4 305.8 L557.0 306.7 L556.7 307.7 L556.3 308.6 L555.9 309.5 L555.5 310.5 L555.0 311.5 L554.5 312.5 L554.0 313.6 L553.4 314.7 L552.8 315.9 L552.2 317.2 L551.5 318.6 L550.8 320.0 L550.1 321.5 L549.4 322.9 L548.7 324.3 L548.0 325.6 L547.3 326.8 L546.6 327.9 L546.0 328.9 L545.4 329.7 L544.8 330.4 L544.0 331.2 L543.3 332.0 L542.5 332.7 L541.7 333.3 L541.0 333.9 L540.3 334.5 L539.6 335.1 L539.1 335.5 A4.5 4.5 0 0 0 544.9 342.5Z M581.1 284a10.300 10.300 0 1 0-20.600 0a10.300 10.300 0 1 0 20.600 0ZM573.2 284.400a2.200 2.200 0 1 1-4.400 0a2.200 2.200 0 1 1 4.400 0Z M577.9 291.4 L578.3 291.7 L578.8 292.1 L579.5 292.6 L580.4 293.3 L581.3 293.9 L582.3 294.6 L583.3 295.3 L584.5 295.9 L585.7 296.5 L587.1 296.9 L588.6 297.1 L590.0 297.1 L591.2 296.9 L592.3 296.7 L593.3 296.4 L594.2 296.1 L595.0 295.8 L595.6 295.5 L596.0 295.4 L596.2 295.3 A4.5 4.5 0 0 0 593.8 286.7 L593.8 286.7 L593.2 286.8 L592.5 287.1 L591.9 287.3 L591.3 287.5 L590.7 287.7 L590.1 287.9 L589.6 288.0 L589.2 288.0 L588.9 288.1 L588.9 288.1 L588.7 288.1 L588.2 287.9 L587.5 287.6 L586.7 287.2 L585.8 286.8 L585.0 286.3 L584.1 285.8 L583.4 285.3 L582.7 284.9 L582.1 284.6 A4.0 4.0 0 0 0 577.9 291.4Z M593.8 288.8 L593.5 289.2 L593.1 289.8 L592.5 290.4 L591.9 291.2 L591.3 292.1 L590.7 293.1 L590.0 294.2 L589.4 295.3 L588.9 296.5 L588.5 297.7 L588.2 299.0 L587.9 300.2 L587.6 301.5 L587.4 302.8 L587.3 304.1 L587.1 305.5 L587.0 306.8 L586.9 308.1 L586.9 309.4 L586.8 310.6 L586.8 311.8 L586.7 312.9 L586.7 314.2 L586.7 315.5 L586.7 316.9 L586.8 318.3 L586.9 319.9 L587.2 321.4 L587.5 323.1 L588.0 324.7 L588.5 326.2 L589.1 327.7 L589.8 329.1 L590.6 330.4 L591.4 331.7 L592.3 332.9 L593.2 334.1 L594.1 335.2 L595.0 336.2 L596.1 337.3 L597.3 338.5 L598.7 339.4 L600.0 340.1 L601.2 340.6 L602.3 340.9 L603.3 341.1 L604.2 341.2 L604.8 341.2 L605.2 341.1 L605.5 341.0 A5.0 5.0 0 0 0 611.3 333.0 L611.3 333.0 L611.0 332.4 L610.5 331.8 L610.2 331.3 L609.9 330.7 L609.8 330.1 L609.7 329.5 L609.7 329.0 L609.8 328.6 L610.1 328.3 L610.3 328.1 L610.5 327.6 L610.5 326.9 L610.5 326.1 L610.5 325.2 L610.5 324.3 L610.5 323.4 L610.4 322.4 L610.4 321.5 L610.4 320.7 L610.4 319.9 L610.5 319.2 L610.4 318.5 L610.4 317.7 L610.4 316.8 L610.3 315.7 L610.2 314.6 L610.2 313.5 L610.1 312.2 L609.9 310.9 L609.8 309.6 L609.6 308.3 L609.4 307.1 L609.2 305.9 L609.0 304.7 L608.8 303.5 L608.6 302.4 L608.3 301.2 L608.1 300.2 L607.8 299.2 L607.5 298.3 L607.2 297.4 L606.8 296.5 L606.3 295.6 L605.9 294.6 L605.5 293.7 L605.0 292.8 L604.6 291.9 L604.3 291.1 L604.0 290.4 L603.8 289.8 A5.0 5.0 0 0 0 593.8 288.8Z M611.4 341.0 L611.8 340.6 L612.3 340.2 L613.0 339.7 L613.7 339.0 L614.6 338.4 L615.4 337.6 L616.3 336.8 L617.3 336.0 L618.2 335.1 L619.1 334.2 L620.0 333.3 L621.0 332.3 L621.9 331.2 L622.9 330.1 L623.9 329.0 L624.8 328.0 L625.6 327.0 L626.3 326.2 L626.9 325.5 L627.4 325.0 A4.5 4.5 0 0 0 620.6 319.0 L620.6 319.0 L620.1 319.6 L619.5 320.4 L618.8 321.2 L618.0 322.2 L617.1 323.2 L616.2 324.2 L615.3 325.3 L614.4 326.2 L613.6 327.1 L612.9 327.8 L612.2 328.4 L611.4 329.0 L610.6 329.6 L609.7 330.2 L608.8 330.8 L608.0 331.3 L607.2 331.8 L606.5 332.3 L605.9 332.7 L605.4 333.0 A5.0 5.0 0 0 0 611.4 341.0Z M664.3 288.8 L664.0 288.5 L663.5 288.1 L662.9 287.6 L662.1 286.9 L661.3 286.2 L660.3 285.4 L659.2 284.6 L658.0 283.9 L656.6 283.3 L655.1 282.8 L653.8 282.5 L652.7 282.3 L651.4 282.2 L650.1 282.2 L648.8 282.3 L647.4 282.5 L646.0 282.9 L644.5 283.3 L643.1 283.9 L641.7 284.7 L640.3 285.5 L638.9 286.5 L637.6 287.5 L636.3 288.6 L635.0 289.7 L633.7 290.9 L632.5 292.2 L631.4 293.5 L630.3 294.8 L629.3 296.2 L628.4 297.7 L627.5 299.2 L626.8 300.8 L626.1 302.4 L625.5 304.0 L624.9 305.6 L624.4 307.1 L624.0 308.6 L623.6 310.1 L623.2 311.5 L622.9 312.8 L622.6 314.2 L622.4 315.6 L622.2 317.0 L622.1 318.4 L622.0 319.8 L622.0 321.1 L622.1 322.5 L622.3 323.8 L622.6 325.1 L623.0 326.4 L623.5 327.8 L624.0 329.1 L624.7 330.4 L625.4 331.7 L626.2 332.9 L627.0 334.2 L627.9 335.4 L628.9 336.5 L630.1 337.7 L631.4 338.7 L632.7 339.5 L634.0 340.1 L635.3 340.5 L636.6 340.8 L637.9 341.0 L639.2 341.0 L640.4 340.9 L641.6 340.8 L642.9 340.5 L644.1 340.1 L645.2 339.6 L646.3 339.0 L647.3 338.4 L648.2 337.7 L649.1 337.0 L650.0 336.2 L650.8 335.4 L651.5 334.6 L652.3 333.8 L653.1 332.7 L653.8 331.6 L654.4 330.5 L655.1 329.3 L655.6 328.2 L656.2 327.1 L656.6 326.1 L657.0 325.2 L657.3 324.6 L657.6 324.1 A4.0 4.0 0 0 0 650.6 320.1 L650.6 320.1 L650.3 320.7 L649.8 321.5 L649.3 322.3 L648.8 323.2 L648.2 324.1 L647.7 325.1 L647.1 325.9 L646.5 326.7 L646.0 327.4 L645.5 327.8 L645.0 328.3 L644.5 328.8 L643.9 329.3 L643.3 329.7 L642.8 330.1 L642.3 330.4 L641.8 330.6 L641.4 330.7 L641.1 330.7 L640.9 330.7 L640.7 330.6 L640.5 330.5 L640.2 330.4 L640.0 330.2 L639.8 330.0 L639.7 329.8 L639.6 329.6 L639.6 329.4 L639.7 329.2 L639.9 329.1 L640.0 328.9 L640.1 328.6 L640.2 328.0 L640.2 327.3 L640.2 326.6 L640.2 325.7 L640.3 324.9 L640.3 324.0 L640.4 323.2 L640.4 322.5 L640.4 321.8 L640.4 321.1 L640.4 320.5 L640.4 319.9 L640.4 319.2 L640.4 318.6 L640.5 317.8 L640.5 317.1 L640.6 316.2 L640.8 315.3 L641.0 314.3 L641.3 313.2 L641.6 312.1 L641.9 311.0 L642.2 309.8 L642.6 308.7 L643.0 307.6 L643.3 306.5 L643.7 305.5 L644.1 304.6 L644.5 303.6 L645.0 302.6 L645.5 301.5 L646.0 300.4 L646.6 299.3 L647.2 298.3 L647.7 297.3 L648.3 296.5 L648.8 295.8 L649.1 295.3 L649.4 295.0 L649.8 294.7 L650.1 294.4 L650.4 294.2 L650.8 294.0 L651.2 293.9 L651.7 293.8 L652.2 293.7 L652.7 293.7 L653.1 293.6 L653.3 293.6 L653.7 293.6 L654.3 293.8 L655.0 294.0 L655.8 294.4 L656.6 294.8 L657.4 295.3 L658.2 295.7 L658.9 296.1 L659.5 296.4 A4.5 4.5 0 0 0 664.3 288.8Z M666.4 286.0 L666.1 286.4 L665.6 287.0 L665.1 287.6 L664.6 288.3 L664.0 289.1 L663.3 289.9 L662.7 290.8 L662.1 291.7 L661.6 292.6 L661.1 293.6 L660.7 294.6 L660.3 295.6 L659.9 296.5 L659.6 297.4 L659.2 298.2 L658.9 299.1 L658.7 299.8 L658.4 300.6 L658.2 301.4 L657.9 302.3 L657.7 303.3 L657.5 304.4 L657.2 305.7 L657.0 307.1 L656.8 308.5 L656.5 310.0 L656.3 311.5 L656.0 313.0 L655.8 314.5 L655.5 315.9 L655.3 317.1 L655.0 318.2 L654.7 319.4 L654.4 320.6 L654.0 322.0 L653.6 323.4 L653.3 324.8 L653.1 326.4 L652.9 328.1 L652.8 329.8 L652.9 331.5 L653.1 333.2 L653.4 334.8 L653.8 336.3 L654.2 337.8 L654.7 339.2 L655.2 340.5 L655.6 341.8 L656.1 343.0 L656.6 344.2 L657.1 345.5 L657.7 346.7 L658.3 347.9 L658.9 349.0 L659.5 350.1 L660.1 351.0 L660.6 351.8 L661.1 352.5 L661.4 353.0 L661.7 353.4 A5.0 5.0 0 0 0 671.3 350.6 L671.3 350.6 L671.3 349.9 L671.2 349.2 L671.1 348.3 L671.1 347.4 L671.1 346.5 L671.1 345.5 L671.1 344.5 L671.2 343.6 L671.3 342.7 L671.4 341.8 L671.6 340.8 L671.7 339.7 L671.9 338.6 L672.2 337.5 L672.4 336.4 L672.7 335.4 L673.0 334.4 L673.2 333.4 L673.5 332.5 L673.8 331.8 L674.0 331.1 L674.2 330.4 L674.4 329.5 L674.7 328.7 L675.0 327.7 L675.3 326.6 L675.6 325.4 L676.0 324.1 L676.4 322.7 L676.9 321.3 L677.3 320.0 L677.8 318.7 L678.3 317.3 L678.8 315.9 L679.3 314.5 L679.8 313.0 L680.3 311.5 L680.8 310.0 L681.2 308.6 L681.5 307.1 L681.7 305.7 L681.8 304.3 L681.8 303.0 L681.8 301.8 L681.7 300.7 L681.6 299.7 L681.5 298.8 L681.3 298.0 L681.1 297.2 L680.9 296.4 L680.7 295.6 L680.4 294.6 L680.1 293.6 L679.8 292.6 L679.5 291.7 L679.2 290.8 L678.9 289.9 L678.6 289.2 L678.4 288.5 L678.2 288.0 A6.0 6.0 0 0 0 666.4 286.0Z M669.8 357.4 L670.3 357.0 L671.0 356.5 L671.9 355.9 L672.9 355.2 L674.0 354.4 L675.2 353.5 L676.4 352.6 L677.5 351.7 L678.7 350.7 L679.8 349.6 L680.8 348.5 L681.6 347.4 L682.4 346.3 L683.2 345.2 L683.9 344.1 L684.5 343.1 L685.1 342.1 L685.7 341.1 L686.3 340.3 L686.9 339.4 L687.7 338.5 L688.4 337.5 L689.1 336.5 L689.8 335.6 L690.4 334.7 L691.1 333.9 L691.7 333.2 L692.4 332.5 L693.0 332.0 L693.6 331.5 L694.3 331.1 L695.1 330.7 L696.0 330.4 L696.8 330.1 L697.8 329.8 L698.7 329.6 L699.6 329.4 L700.5 329.2 L701.4 329.0 L702.2 328.9 L702.9 328.8 L703.7 328.8 L704.5 328.8 L705.4 328.9 L706.3 328.9 L707.2 329.0 L708.1 329.1 L709.0 329.2 L709.9 329.3 L710.7 329.4 L711.4 329.4 L712.0 329.5 L712.6 329.5 L713.2 329.5 L713.8 329.6 L714.4 329.6 L714.9 329.7 L715.4 329.7 L715.9 329.8 L716.3 329.9 A2.0 2.0 0 0 0 717.7 326.1 L717.7 326.1 L717.5 325.9 L717.2 325.7 L716.8 325.4 L716.4 325.0 L715.9 324.6 L715.3 324.2 L714.6 323.7 L713.9 323.3 L713.1 322.9 L712.3 322.6 L711.5 322.3 L710.7 322.0 L709.7 321.7 L708.7 321.4 L707.7 321.1 L706.5 320.8 L705.3 320.6 L704.0 320.5 L702.7 320.4 L701.4 320.5 L700.1 320.6 L698.9 320.8 L697.7 321.1 L696.5 321.5 L695.2 321.9 L694.0 322.3 L692.7 322.9 L691.5 323.5 L690.3 324.1 L689.2 324.9 L688.0 325.7 L686.9 326.6 L686.0 327.6 L685.0 328.5 L684.1 329.5 L683.3 330.5 L682.5 331.4 L681.8 332.4 L681.0 333.3 L680.3 334.2 L679.4 335.2 L678.7 336.3 L677.9 337.3 L677.2 338.3 L676.6 339.3 L675.9 340.2 L675.3 341.1 L674.7 341.9 L674.1 342.6 L673.4 343.2 L672.7 343.8 L671.8 344.5 L670.9 345.1 L669.8 345.8 L668.7 346.5 L667.6 347.1 L666.6 347.7 L665.7 348.3 L664.8 348.8 L664.2 349.2 A5.0 5.0 0 0 0 669.8 357.4Z"/><g font-family="Liberation Sans" font-weight="bold" font-size="8.400" fill="#e60000" stroke="#e60000" stroke-width=".800"><text x="650.100" y="198" textLength="49.800" lengthAdjust="spacingAndGlyphs">manga1932007</text><text x="650.100" y="203.900" textLength="19.800" lengthAdjust="spacingAndGlyphs" font-size="7.600">hd247</text></g></g></g></svg>
<div class="a" style="left:780px;top:62px;width:13.5px;height:462px;background:#2b2b2b;"></div>
<div class="a" style="left:782px;top:234px;width:10px;height:120.5px;background:linear-gradient(to right,#5c5c5c,#747474,#5c5c5c);border-radius:4px"></div>
<svg style="left:780px;top:62px" width="13.5" height="462" viewBox="0 0 13.5 462"><path d="M3.500 7.500l3-4l3 4zM3.500 455l3 4l3-4z" fill="#999"/></svg>
<div class="a" style="left:793.5px;top:48px;width:2.5px;height:491px;background:#1d1d1d;"></div>
<div class="a" style="left:153px;top:524px;width:640.5px;height:14.5px;background:#2b2b2b;"></div>
<div class="a" style="left:394px;top:526px;width:159.5px;height:10.5px;background:linear-gradient(to bottom,#5c5c5c,#747474,#5c5c5c);border-radius:4px"></div>
<svg style="left:153px;top:524px" width="640" height="14" viewBox="0 0 640 14"><path d="M7 4.500l-3.500 2.800l3.500 2.800zM633 4.500l3.500 2.800l-3.500 2.800z" fill="#999"/></svg>
<div class="a" style="left:522px;top:488px;width:253px;height:30px;background:#1f1f1f;border:1px solid #8a8a8a;border-radius:2px"></div>
<div class="t" style="left:522px;top:493px;font-size:8.2px;color:#d8d8d8;width:238px;text-align:center">You are not using the latest version of MediBang Paint.</div>
<div class="t" style="left:522px;top:503.5px;font-size:8.2px;color:#d8d8d8;width:238px;text-align:center">Please install the latest version of MediBang Paint found here.</div>
<svg style="left:759.5px;top:498.5px" width="9" height="9" viewBox="0 0 9 9"><rect x=".5" y=".5" width="8" height="8" fill="none" stroke="#ddd" stroke-width="1"/><path d="M2.500 2.500l4 4M6.500 2.500l-4 4" stroke="#eee" stroke-width="1.200"/></svg>
<div class="a" style="left:796px;top:48px;width:228px;height:491px;background:#232323;"></div>
<div class="h" style="left:796px;top:48px;width:228px;height:15px"></div><div class="t" style="left:796px;top:52px;font-size:6.8px;color:#cfcfcf;width:208px;text-align:center">Họa tiểu</div>
<svg style="left:1005px;top:52.5px" width="17" height="7" viewBox="0 0 17 7"><path d="M3 1.500h-2.500v4.500h4.500v-2.500" fill="none" stroke="#c4c4c4" stroke-width="1"/><path d="M3.500 3l2.300-2.300M4 .5h2v2" fill="none" stroke="#c4c4c4" stroke-width=".9"/><path d="M10.700 1l4.600 4.600M15.300 1l-4.600 4.600" stroke="#d8d8d8" stroke-width="1.500"/></svg>
<div class="b" style="left:799px;top:64.3px;width:14.5px;height:14.6px;background:#3e3e3e;"></div>
<div class="b" style="left:820.5px;top:64.3px;width:14.5px;height:14.6px;background:#3e3e3e;"></div>
<div class="b" style="left:838px;top:64.3px;width:14.5px;height:14.6px;background:#3e3e3e;"></div>
<div class="b" style="left:855.5px;top:64.3px;width:14.5px;height:14.6px;background:#3e3e3e;"></div>
<div class="b" style="left:877.25px;top:64.3px;width:14.5px;height:14.6px;background:#3e3e3e;"></div>
<div class="b" style="left:911px;top:64.3px;width:14.5px;height:14.6px;background:#3e3e3e;"></div>
<div class="b" style="left:933px;top:64.3px;width:14.5px;height:14.6px;background:#3e3e3e;"></div>
<div class="b" style="left:894.3px;top:64.3px;width:14.5px;height:14.6px;background:#262626;border:1px solid #3a3a3a"></div>
<div class="a" style="left:816.5px;top:66px;width:1px;height:11px;background:#444;"></div>
<div class="a" style="left:873.3px;top:66px;width:1px;height:11px;background:#444;"></div>
<div class="a" style="left:929.3px;top:66px;width:1px;height:11px;background:#444;"></div>
<svg style="left:799px;top:64px" width="15" height="15" viewBox="0 0 15 15"><circle cx="6.400" cy="6.400" r="2.900" fill="none" stroke="#e4e4e4" stroke-width="1.100"/><path d="M8.700 8.700l2.600 2.600" stroke="#e4e4e4" stroke-width="1.500" stroke-linecap="round"/><path d="M5.900 5.300l.7-.4v3.100" stroke="#e4e4e4" stroke-width=".8" fill="none"/></svg>
<svg style="left:820.5px;top:64px" width="15" height="15" viewBox="0 0 15 15"><circle cx="6.400" cy="6.400" r="2.900" fill="none" stroke="#e4e4e4" stroke-width="1.100"/><path d="M8.700 8.700l2.600 2.600" stroke="#e4e4e4" stroke-width="1.500" stroke-linecap="round"/><path d="M4.900 6.400h3M6.400 4.900v3" stroke="#e4e4e4" stroke-width="1"/></svg>
<svg style="left:838px;top:64px" width="15" height="15" viewBox="0 0 15 15"><rect x="3.800" y="4" width="7.400" height="7" fill="none" stroke="#e4e4e4" stroke-width="1"/><path d="M5.300 6.700v-1.300h1.300M8.400 5.400h1.300v1.300M9.700 8.300v1.300h-1.300M6.600 9.600h-1.300v-1.300" fill="none" stroke="#e4e4e4" stroke-width=".8"/></svg>
<svg style="left:855.5px;top:64px" width="15" height="15" viewBox="0 0 15 15"><circle cx="6.400" cy="6.400" r="2.900" fill="none" stroke="#e4e4e4" stroke-width="1.100"/><path d="M8.700 8.700l2.600 2.600" stroke="#e4e4e4" stroke-width="1.500" stroke-linecap="round"/><path d="M4.900 6.400h3" stroke="#e4e4e4" stroke-width="1"/></svg>
<svg style="left:877px;top:64px" width="15" height="15" viewBox="0 0 15 15"><g><path d="M3.700 8.300a3.900 3.900 0 1 0 1.200-3.600" fill="none" stroke="#e4e4e4" stroke-width="1.100"/><path d="M3.400 3l.4 3.100l3-.9z" fill="#e4e4e4"/><rect x="5.700" y="6.200" width="3.600" height="2.800" transform="rotate(-20 7.500 7.500)" fill="#e4e4e4"/></g></svg>
<svg style="left:894px;top:64px" width="15" height="15" viewBox="0 0 15 15"><rect x="5" y="5" width="5" height="5" fill="#e4e4e4"/><path d="M3 3l2.200 2.200M12 3l-2.200 2.200M3 12l2.200-2.200M12 12l-2.200-2.200" stroke="#e4e4e4" stroke-width="1.100"/></svg>
<svg style="left:911px;top:64px" width="15" height="15" viewBox="0 0 15 15"><g transform="translate(15,0) scale(-1,1)"><path d="M3.700 8.300a3.900 3.900 0 1 0 1.200-3.600" fill="none" stroke="#e4e4e4" stroke-width="1.100"/><path d="M3.400 3l.4 3.100l3-.9z" fill="#e4e4e4"/><rect x="5.700" y="6.200" width="3.600" height="2.800" transform="rotate(-20 7.500 7.500)" fill="#e4e4e4"/></g></svg>
<svg style="left:933px;top:64px" width="15" height="15" viewBox="0 0 15 15"><path d="M3.500 11.500v-5h3.200v5z" fill="#e4e4e4"/><path d="M8.500 11.500v-4h3v4z" fill="none" stroke="#e4e4e4" stroke-width=".9"/><path d="M5 6v-1a2.500 2.500 0 0 1 5 0v1.500" fill="none" stroke="#e4e4e4" stroke-width=".9"/></svg>
<div class="a" style="left:796px;top:80.75px;width:228px;height:42.75px;background:#474545;"></div>
<div class="a" style="left:870.8px;top:81px;width:80.5px;height:42.5px;background:#232323;"></div>
<div class="a" style="left:871.3px;top:81px;width:1.3px;height:42.5px;background:#d03030;"></div>
<div class="a" style="left:949.8px;top:81px;width:1.3px;height:42.5px;background:#d03030;"></div>
<div class="a" style="left:872.9px;top:81.5px;width:74.4px;height:41.7px;background:#fff;"></div>
<svg style="left:872.900px;top:81.500px;overflow:hidden" width="74.400" height="41.700" viewBox="180.100 134.800 569.100 312.300"><use href="#artg"/></svg>
<div class="h" style="left:796px;top:125.500px;width:228px;height:13.500px"></div><div class="t" style="left:796px;top:129px;font-size:7px;color:#cfcfcf;width:208px;text-align:center">Lớp</div>
<svg style="left:1005px;top:129.5px" width="17" height="7" viewBox="0 0 17 7"><path d="M3 1.500h-2.500v4.500h4.500v-2.500" fill="none" stroke="#c4c4c4" stroke-width="1"/><path d="M3.500 3l2.300-2.300M4 .5h2v2" fill="none" stroke="#c4c4c4" stroke-width=".9"/><path d="M10.700 1l4.600 4.600M15.300 1l-4.600 4.600" stroke="#d8d8d8" stroke-width="1.500"/></svg>
<div class="t" style="left:800px;top:145px;font-size:7px;color:#d0d0d0;">Độ trong</div>
<div class="a" style="left:857px;top:144px;width:133px;height:9.5px;background:linear-gradient(to right,#7cc0f4,#4a8fcf);"></div>
<div class="t" style="left:994px;top:144.5px;font-size:7.2px;color:#d8d8d8;">100 %</div>
<div class="t" style="left:800px;top:160.5px;font-size:7px;color:#d0d0d0;">Pha trộn</div>
<div class="a" style="left:858px;top:158px;width:161px;height:13.5px;background:#434343;border-radius:2px"></div>
<div class="t" style="left:860.5px;top:160.5px;font-size:6.7px;color:#c8c8c8;">Bình thường</div>
<svg style="left:1010px;top:163px" width="6" height="4" viewBox="0 0 6 4"><path d="M0 0h5l-2.500 3z" fill="#999"/></svg>
<div class="a" style="left:801.5px;top:178.5px;width:6.5px;height:6.5px;background:transparent;border:1px solid #4a4a4a"></div>
<div class="t" style="left:811.5px;top:177px;font-size:7px;color:#6a6a6a;">Bảo vệ alpha</div>
<div class="a" style="left:877px;top:178.5px;width:6.5px;height:6.5px;background:transparent;border:1px solid #ddd"></div>
<div class="t" style="left:886.5px;top:177px;font-size:7px;color:#d0d0d0;">Xén bớt</div>
<div class="a" style="left:951px;top:178.5px;width:6.5px;height:6.5px;background:transparent;border:1px solid #ddd"></div>
<div class="t" style="left:960.5px;top:177px;font-size:7px;color:#d0d0d0;">Khóa</div>
<div class="a" style="left:798px;top:190.8px;width:211px;height:102.5px;background:#474545;"></div>
<div class="a" style="left:798px;top:190.8px;width:211px;height:25.2px;background:#555;"></div>
<div class="a" style="left:809.75px;top:190.8px;width:199.25px;height:25.2px;background:#4a97d4;"></div>
<div class="a" style="left:798px;top:216.5px;width:211px;height:23.3px;background:#555;"></div>
<div class="a" style="left:801px;top:200.4px;width:6px;height:6px;border-radius:50%;background:#ddd"></div><div class="a" style="left:801px;top:225.1px;width:6px;height:6px;border-radius:50%;background:#ddd"></div><div class="a" style="left:819.2px;top:200px;width:23px;height:5.5px;background:#d81818;"></div>
<div class="a" style="left:828.5px;top:201.5px;width:13px;height:2.5px;background:#f4dada;"></div>
<div class="a" style="left:821px;top:201.5px;width:6px;height:2.5px;background:#f08080;"></div>
<div class="a" style="left:819.5px;top:223px;width:22.7px;height:11.3px;background:#fff;"></div>
<svg style="left:819.500px;top:222.700px;overflow:hidden" width="22.700" height="12.400" viewBox="180.100 134.800 569.100 312.300"><use href="#artg"/></svg>
<div class="t" style="left:852.5px;top:198.5px;font-size:8.6px;color:#fff;font-weight:bold">manga1932007</div>
<div class="t" style="left:852.5px;top:223.5px;font-size:8.6px;color:#eee;">Lớp1</div>
<svg style="left:996px;top:198px" width="11" height="11" viewBox="0 0 11 11"><circle cx="5.500" cy="5.500" r="3.700" fill="none" stroke="#fff" stroke-width="3" stroke-dasharray="1.600 1.300"/><circle cx="5.500" cy="5.500" r="3.300" fill="#fff"/><circle cx="5.500" cy="5.500" r=".900" fill="#6a8fb0"/></svg>
<div class="a" style="left:1009px;top:190.8px;width:13px;height:102.5px;background:#2a2a2a;"></div>
<div class="a" style="left:1010.3px;top:197px;width:11.2px;height:88px;background:linear-gradient(to right,#5c5c5c,#747474,#5c5c5c);border-radius:4px"></div>
<svg style="left:1009px;top:190.8px" width="13" height="102.5" viewBox="0 0 13 102.5"><path d="M4 5.500l2.700-3.500l2.700 3.500zM4 97l2.700 3.500l2.700-3.500z" fill="#aaa"/></svg>
<div class="b" style="left:800px;top:296.3px;width:14.7px;height:14px;background:#3e3e3e;"></div>
<div class="b" style="left:817px;top:296.3px;width:14.7px;height:14px;background:#3e3e3e;"></div>
<div class="b" style="left:834.5px;top:296.3px;width:14.7px;height:14px;background:#3e3e3e;"></div>
<div class="b" style="left:852px;top:296.3px;width:19px;height:14px;background:#3e3e3e;"></div>
<div class="b" style="left:873.5px;top:296.3px;width:14.7px;height:14px;background:#3e3e3e;"></div>
<div class="b" style="left:895px;top:296.3px;width:14.7px;height:14px;background:#3e3e3e;"></div>
<div class="b" style="left:934px;top:296.3px;width:14.7px;height:14px;background:#3e3e3e;"></div>
<div class="b" style="left:912.5px;top:296.3px;width:14.7px;height:14px;background:#262626;border:1px solid #3a3a3a"></div>
<div class="a" style="left:891.5px;top:298px;width:1px;height:11px;background:#444;"></div>
<div class="a" style="left:930.5px;top:298px;width:1px;height:11px;background:#444;"></div>
<svg style="left:800px;top:296.3px" width="14.7" height="14" viewBox="0 0 14.7 14"><path d="M4 3h4.500l2.500 2.500v6h-7z" fill="none" stroke="#e4e4e4" stroke-width="1"/></svg>
<svg style="left:817px;top:296.3px" width="14.7" height="14" viewBox="0 0 14.7 14"><path d="M4 3h4.500l2.500 2.500v6h-7z" fill="none" stroke="#e4e4e4" stroke-width="1"/><text x="5.500" y="10.500" font-size="5" fill="#e4e4e4" font-family="Liberation Sans">8</text></svg>
<svg style="left:834.5px;top:296.3px" width="14.7" height="14" viewBox="0 0 14.7 14"><path d="M4 3h4.500l2.500 2.500v6h-7z" fill="none" stroke="#e4e4e4" stroke-width="1"/><text x="6" y="10.500" font-size="5" fill="#e4e4e4" font-family="Liberation Sans">1</text></svg>
<svg style="left:852px;top:296.3px" width="19" height="14" viewBox="0 0 19 14"><path d="M3.500 3h4l2.500 2.500v6h-6.500z" fill="none" stroke="#e4e4e4" stroke-width="1"/><path d="M7 9.500h3M8.500 8v3" stroke="#e4e4e4" stroke-width="1"/><path d="M12.500 6h4l-2 2.500z" fill="#e4e4e4"/></svg>
<svg style="left:873.5px;top:296.3px" width="14.7" height="14" viewBox="0 0 14.7 14"><path d="M3 4h3.500l1 1.200h4.500v6h-9z" fill="#e4e4e4"/></svg>
<svg style="left:895px;top:296.3px" width="14.7" height="14" viewBox="0 0 14.7 14"><rect x="3.500" y="5" width="6" height="6" fill="none" stroke="#e4e4e4" stroke-width="1"/><path d="M5.500 5v-1.800h6v6h-2" fill="none" stroke="#e4e4e4" stroke-width="1"/></svg>
<svg style="left:912.5px;top:296.3px" width="14.7" height="14" viewBox="0 0 14.7 14"><rect x="3" y="3" width="3" height="3" fill="none" stroke="#e4e4e4" stroke-width=".9"/><rect x="3" y="8" width="3" height="3" fill="#e4e4e4"/><path d="M6.500 9.500h2" stroke="#e4e4e4" stroke-width=".9"/><rect x="8.500" y="7.500" width="4" height="3.500" fill="#e4e4e4"/></svg>
<svg style="left:934px;top:296.3px" width="14.7" height="14" viewBox="0 0 14.7 14"><path d="M4 4.500h6.500M6 4.500v-1.200h2.500v1.200" fill="none" stroke="#e4e4e4" stroke-width="1"/><path d="M4.500 5.500h5.500v6h-5.500z" fill="#e4e4e4"/><path d="M6.200 6.500v4M8.300 6.500v4" stroke="#333" stroke-width=".8"/></svg>
<div class="h" style="left:796px;top:317px;width:228px;height:14px"></div><div class="t" style="left:796px;top:320.5px;font-size:7px;color:#cfcfcf;width:208px;text-align:center">Reference</div>
<svg style="left:1005px;top:321px" width="17" height="7" viewBox="0 0 17 7"><path d="M3 1.500h-2.500v4.500h4.500v-2.500" fill="none" stroke="#c4c4c4" stroke-width="1"/><path d="M3.500 3l2.300-2.300M4 .5h2v2" fill="none" stroke="#c4c4c4" stroke-width=".9"/><path d="M10.700 1l4.600 4.600M15.300 1l-4.600 4.600" stroke="#d8d8d8" stroke-width="1.500"/></svg>
<div class="b" style="left:799px;top:333.6px;width:14.5px;height:14.4px;background:#3e3e3e;"></div>
<div class="b" style="left:816.3px;top:333.6px;width:14.5px;height:14.4px;background:#3e3e3e;"></div>
<div class="b" style="left:833.5px;top:333.6px;width:14.5px;height:14.4px;background:#262626;border:1px solid #3a3a3a"></div>
<div class="b" style="left:855.3px;top:333.6px;width:14.5px;height:14.4px;background:#3e3e3e;"></div>
<div class="b" style="left:872.5px;top:333.6px;width:14.5px;height:14.4px;background:#262626;border:1px solid #3a3a3a"></div>
<div class="b" style="left:890px;top:333.6px;width:14.5px;height:14.4px;background:#262626;border:1px solid #3a3a3a"></div>
<div class="b" style="left:911.5px;top:333.6px;width:14.5px;height:14.4px;background:#262626;border:1px solid #3a3a3a"></div>
<div class="b" style="left:928.7px;top:333.6px;width:14.5px;height:14.4px;background:#4a9ad8;"></div>
<div class="b" style="left:950.3px;top:333.6px;width:14.5px;height:14.4px;background:#262626;border:1px solid #3a3a3a"></div>
<div class="b" style="left:967.6px;top:333.6px;width:14.5px;height:14.4px;background:#262626;border:1px solid #3a3a3a"></div>
<div class="b" style="left:985.5px;top:333.6px;width:14.5px;height:14.4px;background:#262626;border:1px solid #3a3a3a"></div>
<div class="b" style="left:1006.6px;top:333.6px;width:14.5px;height:14.4px;background:#262626;border:1px solid #3a3a3a"></div>
<div class="a" style="left:851.5px;top:335.5px;width:1px;height:11px;background:#444;"></div>
<div class="a" style="left:907.5px;top:335.5px;width:1px;height:11px;background:#444;"></div>
<div class="a" style="left:946.5px;top:335.5px;width:1px;height:11px;background:#444;"></div>
<div class="a" style="left:1003px;top:335.5px;width:1px;height:11px;background:#444;"></div>
<svg style="left:799px;top:333.6px" width="14.5" height="14.4" viewBox="0 0 14.5 14.4"><path d="M3.500 8a2 2 0 0 1 .5-3.900a3 3 0 0 1 5.800-.5a2.300 2.300 0 0 1 .7 4.400z" fill="#e4e4e4"/><path d="M7.200 12.500v-4" stroke="#e4e4e4" stroke-width="1.500"/><path d="M5 10.500l2.200 2.300l2.200-2.300" fill="none" stroke="#e4e4e4" stroke-width="1.100"/></svg>
<svg style="left:816.3px;top:333.6px" width="14.5" height="14.4" viewBox="0 0 14.5 14.4"><path d="M3 4h3.500l1 1.200h4v1.300h-6.500l-2 4.500z" fill="#e4e4e4"/><path d="M5.500 7.500h7l-2 4h-7z" fill="#e4e4e4"/></svg>
<svg style="left:833.5px;top:333.6px" width="14.5" height="14.4" viewBox="0 0 14.5 14.4"><path d="M4.500 4.500l5.500 5.500M10 4.500l-5.500 5.500" stroke="#e4e4e4" stroke-width="1.300"/></svg>
<svg style="left:855.3px;top:333.3px" width="15" height="15" viewBox="0 0 15 15"><circle cx="6.400" cy="6.400" r="2.900" fill="none" stroke="#e4e4e4" stroke-width="1.100"/><path d="M8.700 8.700l2.600 2.600" stroke="#e4e4e4" stroke-width="1.500" stroke-linecap="round"/><path d="M4.900 6.400h3M6.400 4.900v3" stroke="#e4e4e4" stroke-width="1"/></svg>
<svg style="left:872.5px;top:333.3px" width="15" height="15" viewBox="0 0 15 15"><rect x="3.800" y="4" width="7.400" height="7" fill="none" stroke="#e4e4e4" stroke-width="1"/><path d="M5.300 6.700v-1.300h1.300M8.400 5.400h1.300v1.300M9.700 8.300v1.300h-1.300M6.600 9.600h-1.300v-1.300" fill="none" stroke="#e4e4e4" stroke-width=".8"/></svg>
<svg style="left:890px;top:333.3px" width="15" height="15" viewBox="0 0 15 15"><circle cx="6.400" cy="6.400" r="2.900" fill="none" stroke="#e4e4e4" stroke-width="1.100"/><path d="M8.700 8.700l2.600 2.600" stroke="#e4e4e4" stroke-width="1.500" stroke-linecap="round"/><path d="M4.900 6.400h3" stroke="#e4e4e4" stroke-width="1"/></svg>
<svg style="left:911.5px;top:333.6px" width="14.5" height="14.4" viewBox="0 0 14.5 14.4"><path d="M3.500 11l1-3l4.500-4.500l2 2l-4.500 4.500z" fill="none" stroke="#e4e4e4" stroke-width="1.100" stroke-linejoin="round"/><path d="M8.500 3l1.500-1.500a1.300 1.300 0 0 1 2 2l-1.500 1.500l.8.800l-.8.800l-3.500-3.500l.8-.8z" fill="#e4e4e4"/></svg>
<svg style="left:928.7px;top:333.6px" width="14.5" height="14.4" viewBox="0 0 14.5 14.4"><path d="M4.500 12.500l-2.500-4.200c-.4-.8.500-1.400 1.200-.7l1 1.100v-5c0-.8 1.300-.8 1.300 0v-1c0-.8 1.400-.8 1.400 0v.8c0-.8 1.400-.8 1.400 0v1.300c0-.8 1.300-.8 1.300 0v5.200c0 1.200-.6 2.500-.6 2.500z" fill="#fff"/></svg>
<svg style="left:950.3px;top:333.3px" width="15" height="15" viewBox="0 0 15 15"><g><path d="M3.700 8.300a3.900 3.900 0 1 0 1.200-3.600" fill="none" stroke="#e4e4e4" stroke-width="1.100"/><path d="M3.400 3l.4 3.100l3-.9z" fill="#e4e4e4"/><rect x="5.700" y="6.200" width="3.600" height="2.800" transform="rotate(-20 7.500 7.500)" fill="#e4e4e4"/></g></svg>
<svg style="left:967.6px;top:333.3px" width="15" height="15" viewBox="0 0 15 15"><rect x="5" y="5" width="5" height="5" fill="#e4e4e4"/><path d="M3 3l2.200 2.200M12 3l-2.200 2.200M3 12l2.200-2.200M12 12l-2.200-2.200" stroke="#e4e4e4" stroke-width="1.100"/></svg>
<svg style="left:985.5px;top:333.3px" width="15" height="15" viewBox="0 0 15 15"><g transform="translate(15,0) scale(-1,1)"><path d="M3.700 8.300a3.900 3.900 0 1 0 1.200-3.600" fill="none" stroke="#e4e4e4" stroke-width="1.100"/><path d="M3.400 3l.4 3.100l3-.9z" fill="#e4e4e4"/><rect x="5.700" y="6.200" width="3.600" height="2.800" transform="rotate(-20 7.500 7.500)" fill="#e4e4e4"/></g></svg>
<svg style="left:1006.6px;top:333.3px" width="15" height="15" viewBox="0 0 15 15"><path d="M3.500 11.500v-5h3.200v5z" fill="#e4e4e4"/><path d="M8.500 11.500v-4h3v4z" fill="none" stroke="#e4e4e4" stroke-width=".9"/><path d="M5 6v-1a2.500 2.500 0 0 1 5 0v1.500" fill="none" stroke="#e4e4e4" stroke-width=".9"/></svg>
<div class="a chk" style="left:795.700px;top:350.300px;width:228.300px;height:40.700px;background-color:#fbfbfb;background-image:linear-gradient(45deg,#ececec 25%,transparent 25%,transparent 75%,#ececec 75%),linear-gradient(45deg,#ececec 25%,transparent 25%,transparent 75%,#ececec 75%);background-size:4px 4px;background-position:0 0,2px 2px"></div><div class="h" style="left:796px;top:393.500px;width:228px;height:14.500px"></div><div class="t" style="left:796px;top:397.5px;font-size:6.6px;color:#cfcfcf;width:208px;text-align:center">Brush Size</div>
<svg style="left:1005px;top:398px" width="17" height="7" viewBox="0 0 17 7"><path d="M3 1.500h-2.500v4.500h4.500v-2.500" fill="none" stroke="#c4c4c4" stroke-width="1"/><path d="M3.500 3l2.300-2.300M4 .5h2v2" fill="none" stroke="#c4c4c4" stroke-width=".9"/><path d="M10.700 1l4.600 4.600M15.300 1l-4.600 4.600" stroke="#d8d8d8" stroke-width="1.500"/></svg>
<div class="a" style="left:796px;top:408px;width:215px;height:129.5px;background:#474545;"></div>
<div class="a" style="left:796.9px;top:408.5px;width:24.5px;height:30.65px;background:#555;"></div>
<div class="t" style="left:796.4px;top:430.5px;width:25.5px;text-align:center;font-size:6.200px;color:#f0f0f0">1</div><div class="a" style="left:822.4px;top:408.5px;width:24.5px;height:30.65px;background:#555;"></div>
<div class="t" style="left:821.9px;top:430.5px;width:25.5px;text-align:center;font-size:6.200px;color:#f0f0f0">1.5</div><div class="a" style="left:847.9px;top:408.5px;width:24.5px;height:30.65px;background:#555;"></div>
<div class="t" style="left:847.4px;top:430.5px;width:25.5px;text-align:center;font-size:6.200px;color:#f0f0f0">2</div><div class="a" style="left:873.4px;top:408.5px;width:24.5px;height:30.65px;background:#555;"></div>
<div class="t" style="left:872.9px;top:430.5px;width:25.5px;text-align:center;font-size:6.200px;color:#f0f0f0">3</div><div class="a" style="left:898.9px;top:408.5px;width:24.5px;height:30.65px;background:#555;"></div>
<div class="t" style="left:898.4px;top:430.5px;width:25.5px;text-align:center;font-size:6.200px;color:#f0f0f0">4</div><div class="a" style="left:924.4px;top:408.5px;width:24.5px;height:30.65px;background:#555;"></div>
<div class="t" style="left:923.9px;top:430.5px;width:25.5px;text-align:center;font-size:6.200px;color:#f0f0f0">5</div><div class="a" style="left:949.9px;top:408.5px;width:24.5px;height:30.65px;background:#555;"></div>
<div class="t" style="left:949.4px;top:430.5px;width:25.5px;text-align:center;font-size:6.200px;color:#f0f0f0">7</div><div class="a" style="left:975.4px;top:408.5px;width:24.5px;height:30.65px;background:#555;"></div>
<div class="t" style="left:974.9px;top:430.5px;width:25.5px;text-align:center;font-size:6.200px;color:#f0f0f0">10</div><div class="a" style="left:796.9px;top:440.15px;width:24.5px;height:30.65px;background:#555;"></div>
<div class="t" style="left:796.4px;top:462.15px;width:25.5px;text-align:center;font-size:6.200px;color:#f0f0f0">12</div><div class="a" style="left:822.4px;top:440.15px;width:24.5px;height:30.65px;background:#555;"></div>
<div class="t" style="left:821.9px;top:462.15px;width:25.5px;text-align:center;font-size:6.200px;color:#f0f0f0">15</div><div class="a" style="left:847.9px;top:440.15px;width:24.5px;height:30.65px;background:#555;"></div>
<div class="t" style="left:847.4px;top:462.15px;width:25.5px;text-align:center;font-size:6.200px;color:#f0f0f0">20</div><div class="a" style="left:873.4px;top:440.15px;width:24.5px;height:30.65px;background:#555;"></div>
<div class="t" style="left:872.9px;top:462.15px;width:25.5px;text-align:center;font-size:6.200px;color:#f0f0f0">25</div><div class="a" style="left:898.9px;top:440.15px;width:24.5px;height:30.65px;background:#555;"></div>
<div class="t" style="left:898.4px;top:462.15px;width:25.5px;text-align:center;font-size:6.200px;color:#f0f0f0">30</div><div class="a" style="left:924.4px;top:440.15px;width:24.5px;height:30.65px;background:#555;"></div>
<div class="t" style="left:923.9px;top:462.15px;width:25.5px;text-align:center;font-size:6.200px;color:#f0f0f0">40</div><div class="a" style="left:949.9px;top:440.15px;width:24.5px;height:30.65px;background:#555;"></div>
<div class="t" style="left:949.4px;top:462.15px;width:25.5px;text-align:center;font-size:6.200px;color:#f0f0f0">50</div><div class="a" style="left:975.4px;top:440.15px;width:24.5px;height:30.65px;background:#555;"></div>
<div class="t" style="left:974.9px;top:462.15px;width:25.5px;text-align:center;font-size:6.200px;color:#f0f0f0">70</div><div class="a" style="left:796.9px;top:471.8px;width:24.5px;height:30.65px;background:#555;"></div>
<div class="t" style="left:796.4px;top:493.8px;width:25.5px;text-align:center;font-size:6.200px;color:#f0f0f0">100</div><div class="a" style="left:822.4px;top:471.8px;width:24.5px;height:30.65px;background:#555;"></div>
<div class="t" style="left:821.9px;top:493.8px;width:25.5px;text-align:center;font-size:6.200px;color:#f0f0f0">150</div><div class="a" style="left:847.9px;top:471.8px;width:24.5px;height:30.65px;background:#555;"></div>
<div class="t" style="left:847.4px;top:493.8px;width:25.5px;text-align:center;font-size:6.200px;color:#f0f0f0">200</div><div class="a" style="left:873.4px;top:471.8px;width:24.5px;height:30.65px;background:#555;"></div>
<div class="t" style="left:872.9px;top:493.8px;width:25.5px;text-align:center;font-size:6.200px;color:#f0f0f0">300</div><div class="a" style="left:898.9px;top:471.8px;width:24.5px;height:30.65px;background:#555;"></div>
<div class="t" style="left:898.4px;top:493.8px;width:25.5px;text-align:center;font-size:6.200px;color:#f0f0f0">400</div><div class="a" style="left:924.4px;top:471.8px;width:24.5px;height:30.65px;background:#555;"></div>
<div class="t" style="left:923.9px;top:493.8px;width:25.5px;text-align:center;font-size:6.200px;color:#f0f0f0">500</div><div class="a" style="left:949.9px;top:471.8px;width:24.5px;height:30.65px;background:#555;"></div>
<div class="t" style="left:949.4px;top:493.8px;width:25.5px;text-align:center;font-size:6.200px;color:#f0f0f0">700</div><div class="a" style="left:975.4px;top:471.8px;width:24.5px;height:30.65px;background:#555;"></div>
<div class="t" style="left:974.9px;top:493.8px;width:25.5px;text-align:center;font-size:6.200px;color:#f0f0f0">1000</div><svg style="left:0px;top:0px" width="1024" height="576" viewBox="0 0 1024 576"><circle cx="809.15" cy="420.40" r="0.3" fill="#777"/><circle cx="834.65" cy="420.40" r="0.35" fill="#777"/><circle cx="860.15" cy="420.40" r="0.5" fill="#aaa"/><circle cx="885.65" cy="420.40" r="0.65" fill="#aaa"/><circle cx="911.15" cy="420.40" r="1.3" fill="#f0f0f0"/><circle cx="936.65" cy="420.40" r="1.4" fill="#f0f0f0"/><circle cx="962.15" cy="420.40" r="2.3" fill="#f0f0f0"/><circle cx="987.65" cy="420.40" r="3.4" fill="#f0f0f0"/><circle cx="809.15" cy="452.05" r="4.0" fill="#f0f0f0"/><circle cx="834.65" cy="452.05" r="4.8" fill="#f0f0f0"/><circle cx="860.15" cy="452.05" r="6.3" fill="#f0f0f0"/><circle cx="885.65" cy="452.05" r="7.8" fill="#f0f0f0"/><circle cx="911.15" cy="452.05" r="7.8" fill="#f0f0f0"/><circle cx="936.65" cy="452.05" r="7.8" fill="#f0f0f0"/><circle cx="962.15" cy="452.05" r="7.8" fill="#f0f0f0"/><circle cx="987.65" cy="452.05" r="7.8" fill="#f0f0f0"/><circle cx="809.15" cy="483.70" r="7.8" fill="#f0f0f0"/><circle cx="834.65" cy="483.70" r="7.8" fill="#f0f0f0"/><circle cx="860.15" cy="483.70" r="7.8" fill="#f0f0f0"/><circle cx="885.65" cy="483.70" r="7.8" fill="#f0f0f0"/><circle cx="911.15" cy="483.70" r="7.8" fill="#f0f0f0"/><circle cx="936.65" cy="483.70" r="7.8" fill="#f0f0f0"/><circle cx="962.15" cy="483.70" r="7.8" fill="#f0f0f0"/><circle cx="987.65" cy="483.70" r="7.8" fill="#f0f0f0"/></svg>
<div class="a" style="left:1011px;top:408px;width:13px;height:129.5px;background:#2a2a2a;"></div>
<div class="a" style="left:1011.8px;top:415px;width:11.4px;height:115px;background:linear-gradient(to right,#5c5c5c,#747474,#5c5c5c);border-radius:4px"></div>
<svg style="left:1011px;top:408px" width="13" height="129.5" viewBox="0 0 13 129.5"><path d="M3.800 5.500l2.700-3.500l2.700 3.500zM3.800 124l2.700 3.500l2.700-3.500z" fill="#aaa"/></svg>
<div class="a" style="left:0px;top:538.5px;width:1024px;height:11.5px;background:#222;"></div>
<div class="t" style="left:4.25px;top:540px;font-size:7.1px;color:#cfcfcf;">1336 * 732 pixel</div>
<div class="t" style="left:62px;top:540px;font-size:7.1px;color:#cfcfcf;">(35.3 * 19.4cm)</div>
<div class="t" style="left:117px;top:540px;font-size:7.1px;color:#cfcfcf;">96 dpi</div>
<div class="t" style="left:143.75px;top:540px;font-size:7.1px;color:#cfcfcf;">66 %</div>
<div class="t" style="left:165.75px;top:540px;font-size:7.1px;color:#cfcfcf;">( 845, 355 )</div>
<div class="a" style="left:0px;top:550px;width:1024px;height:26px;background:linear-gradient(to right,#3c3c3c 0,#404040 250px,#444646 480px,#364644 560px,#36403f 625px,#3c3c3c 690px,#393939 750px,#2e2e2e 815px,#272727 860px,#252525 1024px);"></div>
<svg style="left:10px;top:558px" width="10" height="10" viewBox="0 0 10 10"><path d="M0 1.400l4.300-.6v4h-4.300zM4.900.700l5.100-.7v4.800h-5.100zM0 5.300h4.300v4l-4.300-.6zM4.900 5.300h5.100v4.700l-5.100-.7z" fill="#fff"/></svg>
<div class="a" style="left:31px;top:550.5px;width:219.5px;height:25.5px;background:#f2f2f2;"></div>
<svg style="left:39px;top:557px" width="10" height="11" viewBox="0 0 10 11"><circle cx="6" cy="4" r="3.200" fill="none" stroke="#222" stroke-width="1"/><path d="M3.800 6.500l-3 3.500" stroke="#222" stroke-width="1.100"/></svg>
<div class="t" style="left:56.5px;top:558px;font-size:9.15px;color:#333;">Type here to search</div>
<svg style="left:260px;top:557px" width="12" height="12" viewBox="0 0 12 12"><circle cx="6" cy="6" r="4" fill="none" stroke="#fff" stroke-width="1.400"/></svg>
<svg style="left:291.5px;top:558px" width="12" height="10" viewBox="0 0 12 10"><rect x="1" y="1.500" width="6" height="7" fill="none" stroke="#fff" stroke-width="1"/><path d="M9 1v8.500" stroke="#fff" stroke-width="1"/><path d="M0 3h1M0 7h1M9 3h1.500M9 7h1.500" stroke="#fff" stroke-width=".8"/></svg>
<svg style="left:322px;top:555px" width="15" height="16" viewBox="0 0 15 16"><path d="M4.500 5v-1.500a3 3 0 0 1 6 0v1.500" fill="none" stroke="#eee" stroke-width="1"/><rect x="1.500" y="5" width="12" height="10" fill="#f0f0f0"/><rect x="5" y="7.500" width="2.300" height="2.300" fill="#f25022"/><rect x="7.800" y="7.500" width="2.300" height="2.300" fill="#7fba00"/><rect x="5" y="10.300" width="2.300" height="2.300" fill="#00a4ef"/><rect x="7.800" y="10.300" width="2.300" height="2.300" fill="#ffb900"/></svg>
<svg style="left:352.5px;top:556px" width="17" height="14" viewBox="0 0 17 14"><path d="M.5 5l8-4.500l8 4.500v8.500h-16z" fill="#1a86d8"/><path d="M.5 5l8 5l8-5v8.500h-16z" fill="#3aa0ea"/><path d="M.5 5.500l8 4.500l8-4.500" fill="none" stroke="#d8ecfa" stroke-width="1.200"/></svg>
<svg style="left:385px;top:555.5px" width="14" height="15" viewBox="0 0 14 15"><ellipse cx="7" cy="7.500" rx="6.500" ry="7" fill="#e2122a"/><ellipse cx="7" cy="7.500" rx="2.800" ry="5" fill="#3c3c3c"/></svg>
<svg style="left:417px;top:556px" width="14" height="14" viewBox="0 0 14 14"><circle cx="7" cy="7" r="6.500" fill="#6fb63a"/><circle cx="7" cy="7.500" r="3.800" fill="none" stroke="#e8f6dc" stroke-width="1.300"/><circle cx="10" cy="4" r="2" fill="#f0f4e8"/><circle cx="10.300" cy="3.800" r=".9" fill="#d4602a"/></svg>
<div class="a" style="left:440px;top:550px;width:30.5px;height:26px;background:#545656;"></div>
<svg style="left:447.5px;top:555.5px" width="15" height="15" viewBox="0 0 15 15"><rect x="0" y="0" width="15" height="15" rx="3.500" fill="#f4f4f4"/><circle cx="7.500" cy="7.500" r="4.600" fill="#2aa36b"/><path d="M7.500 2.900a4.600 4.600 0 0 1 4.600 4.600h-4.600z" fill="#e8553c"/><path d="M2.900 7.500a4.600 4.600 0 0 1 4.600-4.600v4.600z" fill="#f2c63c"/><circle cx="7.500" cy="8" r="2.200" fill="#2c6fb0"/></svg>
<div class="a" style="left:379.5px;top:574.5px;width:24px;height:1.5px;background:#8ab4dc;"></div>
<div class="a" style="left:411.5px;top:574.5px;width:24px;height:1.5px;background:#8ab4dc;"></div>
<div class="a" style="left:440px;top:574.5px;width:30.5px;height:1.5px;background:#8ab4dc;"></div>
<svg style="left:852px;top:555px" width="80" height="16" viewBox="0 0 80 16"><path d="M3 10l3.500-3.500l3.500 3.500" fill="none" stroke="#eee" stroke-width="1"/><rect x="19" y="6" width="7" height="5" fill="#eee"/><path d="M17 5.500h2.500M18 5.500v5" stroke="#eee" stroke-width=".9"/><path d="M34 12a1 1 0 0 1 1-1M33 9.500a3 3 0 0 1 3-1.500M32.500 7a5.500 5.500 0 0 1 5-2M38 12v-7" fill="none" stroke="#ddd" stroke-width=".9"/><path d="M46 7h1.500l2-2v7l-2-2h-1.500z" fill="none" stroke="#eee" stroke-width=".9"/><path d="M51 7l2.500 2.500M53.500 7l-2.500 2.500" stroke="#eee" stroke-width=".8"/><rect x="63" y="5.500" width="5.500" height="6.500" rx="1.500" fill="none" stroke="#eee" stroke-width=".9"/><path d="M63.500 3.500h4.500M63.500 14h4.500" stroke="#eee" stroke-width=".8"/></svg>
<div class="t" style="left:932.5px;top:560px;font-size:6.8px;color:#eee;">VIE</div>
<div class="t" style="left:947.5px;top:553px;font-size:6.8px;color:#f0f0f0;width:44px;text-align:center">9:59 PM</div>
<div class="t" style="left:947.5px;top:564.5px;font-size:6.8px;color:#f0f0f0;width:44px;text-align:center">9/7/2021</div>
<svg style="left:996px;top:557px" width="12" height="12" viewBox="0 0 12 12"><path d="M1 1h10v7.500h-3.500l-1.500 1.800l-1.500-1.800h-3.500z" fill="none" stroke="#f0f0f0" stroke-width="1"/></svg>
</body></html>
